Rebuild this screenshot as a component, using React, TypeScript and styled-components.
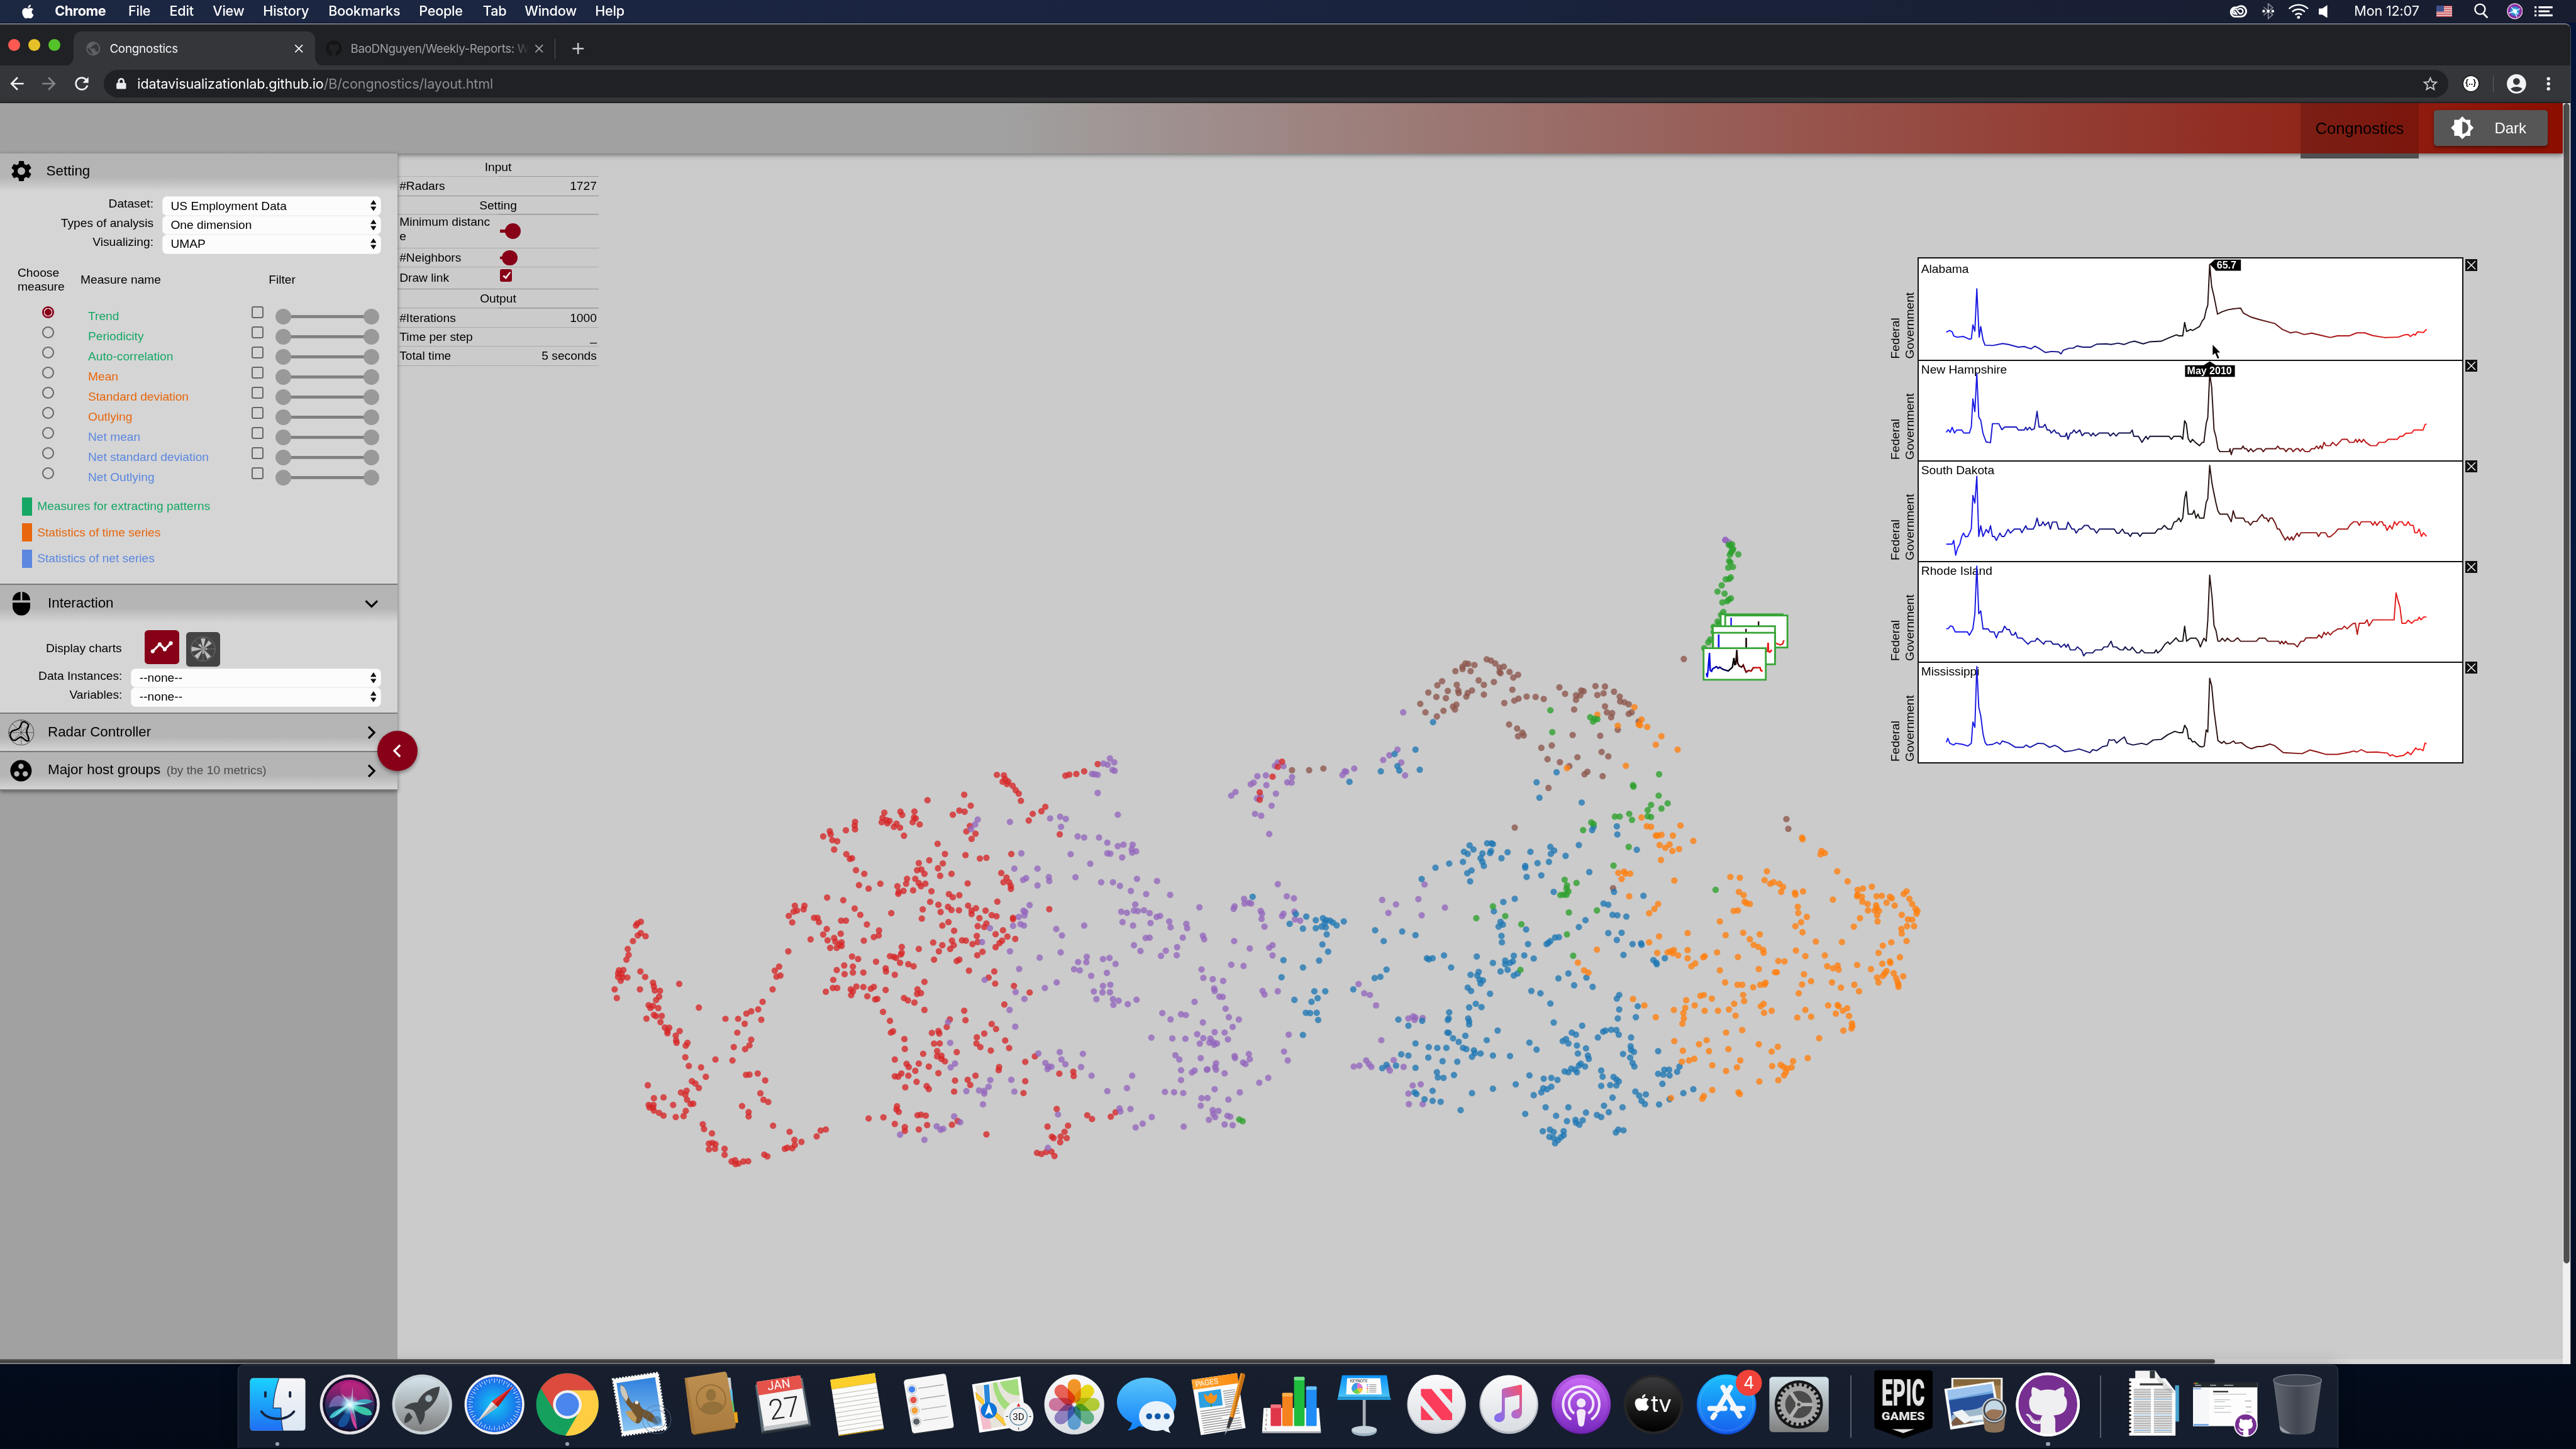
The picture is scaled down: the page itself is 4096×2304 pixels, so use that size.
import React from "react";
import styled, { createGlobalStyle, css } from "styled-components";
import { FaApple, FaGithub, FaLock } from "react-icons/fa";
import {
  MdAccountCircle,
  MdAdd,
  MdArrowBack,
  MdArrowForward,
  MdBrightness6,
  MdClose,
  MdGroupWork,
  MdPublic,
  MdRefresh,
  MdSettings,
  MdStarBorder,
  MdTimeline,
} from "react-icons/md";

/* ------------------------------------------------------------------ */
/* Base                                                                */
/* ------------------------------------------------------------------ */

const GlobalStyle = createGlobalStyle`
  html, body { margin: 0; padding: 0; background: #04102a; overflow: hidden; }
  * { box-sizing: border-box; }
`;

const uiFont = `Inter, Roboto, "Liberation Sans", sans-serif`;
const pageFont = `"Liberation Sans", Arial, Helvetica, sans-serif`;

const Desktop = styled.div`
  zoom: 0.8;
  width: 5120px;
  height: 2880px;
  overflow: hidden;
  display: flex;
  flex-direction: column;
  align-items: flex-start;
  font-family: ${pageFont};
  color: #000;
  background: linear-gradient(180deg, #031238 0%, #04173f 40%, #04102c 80%, #030a16 100%);
`;

/* ------------------------------------------------------------------ */
/* Menu bar                                                            */
/* ------------------------------------------------------------------ */

const MenuBar = styled.div`
  width: 100%;
  height: 45px;
  flex: none;
  display: flex;
  align-items: center;
  justify-content: space-between;
  padding: 0 46px 0 40px;
  background: linear-gradient(90deg, #1c2742 0%, #1a2440 45%, #181d2f 100%);
  color: #fff;
  font-family: ${uiFont};
  font-size: 27px;
  line-height: 44px;
`;

const MenuGroup = styled.div`
  display: flex;
  align-items: center;
  gap: 38px;
  svg { display: block; }
`;

const MenuItem = styled.span<{ $w: number; $bold?: boolean }>`
  width: ${(p) => p.$w}px;
  white-space: nowrap;
  letter-spacing: ${(p) => (p.$bold ? "-0.5px" : "-0.3px")};
  font-weight: ${(p) => (p.$bold ? 700 : 500)};
`;

const StatusGroup = styled.div`
  display: flex;
  align-items: center;
  svg { display: block; flex: none; }
`;

const Clock = styled.span`
  width: 134px;
  margin: 0 29px 0 52px;
  white-space: nowrap;
  letter-spacing: -0.2px;
`;

const Spacer = styled.span<{ $w: number }>`
  width: ${(p) => p.$w}px;
  flex: none;
`;

/* ------------------------------------------------------------------ */
/* Browser chrome                                                      */
/* ------------------------------------------------------------------ */

const BrowserWindow = styled.div`
  width: 5110px;
  height: 2665px;
  flex: none;
  margin-top: 1px;
  display: flex;
  flex-direction: column;
  border-top: 2.5px solid #77787a;
  border-right: 1.25px solid #4a4d55;
  border-radius: 0 12px 0 0;
  overflow: hidden;
  background: #202124;
`;

const TabStrip = styled.div`
  height: 82px;
  flex: none;
  display: flex;
  align-items: flex-end;
  background: #202124;
  font-family: ${uiFont};
  font-size: 23.5px;
`;

const TrafficLights = styled.div`
  width: 146px;
  height: 82px;
  padding: 0 0 1px 16px;
  display: flex;
  align-items: center;
  gap: 16px;
`;

const Light = styled.span<{ $c: string }>`
  width: 24px;
  height: 24px;
  border-radius: 50%;
  background: ${(p) => p.$c};
`;

const Tab = styled.div<{ $active?: boolean }>`
  position: relative;
  height: 68px;
  width: ${(p) => (p.$active ? 480 : 474)}px;
  display: flex;
  align-items: center;
  padding: 0 18px 0 ${(p) => (p.$active ? 23 : 22)}px;
  color: ${(p) => (p.$active ? "#f4f4f5" : "#9fa1a4")};
  background: ${(p) => (p.$active ? "#35363a" : "transparent")};
  border-radius: 16px 16px 0 0;
  svg { flex: none; display: block; }
  ${(p) =>
    p.$active &&
    css`
      &::before, &::after {
        content: "";
        position: absolute;
        bottom: 0;
        width: 16px;
        height: 16px;
      }
      &::before { left: -16px; background: radial-gradient(circle at 0 0, transparent 15.5px, #35363a 16px); }
      &::after { right: -16px; background: radial-gradient(circle at 100% 0, transparent 15.5px, #35363a 16px); }
    `}
`;

const TabTitle = styled.span<{ $fade?: boolean }>`
  flex: 1;
  margin: 0 ${(p) => (p.$fade ? 6 : 14)}px 0 ${(p) => (p.$fade ? 17 : 16)}px;
  white-space: nowrap;
  letter-spacing: ${(p) => (p.$fade ? "-0.5px" : "-0.3px")};
  line-height: 34px;
  ${(p) => p.$fade && css`mask-image: linear-gradient(90deg, #000 90%, transparent 100%);`}
`;

const TabDivider = styled.span`
  width: 2px;
  height: 40px;
  margin: 0 26px 13px 2px;
  background: #55575b;
`;

const NewTab = styled.span`
  height: 68px;
  display: flex;
  align-items: center;
  color: #c6c8ca;
`;

const Toolbar = styled.div`
  height: 74px;
  flex: none;
  display: flex;
  align-items: center;
  padding: 0 26px 0 14px;
  background: #35363a;
  border-bottom: 2.5px solid #27282b;
  color: #f1f3f4;
  font-family: ${uiFont};
  svg { display: block; flex: none; }
`;

const NavButtons = styled.div`
  width: 192px;
  display: flex;
  gap: 24px;
`;

const Omnibox = styled.div`
  flex: 1;
  height: 56px;
  border-radius: 28px;
  background: #202124;
  display: flex;
  align-items: center;
  padding: 0 18px 0 24px;
`;

const Url = styled.span`
  flex: 1;
  margin-left: 21px;
  font-size: 27px;
  line-height: 40px;
  letter-spacing: -0.2px;
  white-space: nowrap;
  color: #fff;
`;

const UrlPath = styled.span`
  color: #8b8d90;
`;

const ExtensionBadge = styled.span`
  width: 30px;
  height: 30px;
  margin: 0 29px;
  border-radius: 50%;
  background: #fff;
  color: #000;
  font: 700 16px/26px ${pageFont};
  text-align: center;
  box-shadow: 0 0 0 2px #1a1b1d;
`;

const ToolDivider = styled.span`
  width: 2px;
  height: 32px;
  margin-right: 22px;
  background: #616266;
`;

/* ------------------------------------------------------------------ */
/* Page frame                                                          */
/* ------------------------------------------------------------------ */

const PageFrame = styled.div`
  flex: 1;
  display: flex;
  min-height: 0;
`;

const PageColumn = styled.div`
  width: 5094px;
  display: flex;
  flex-direction: column;
`;

const VerticalTrack = styled.div`
  flex: 1;
  background: #f0f0f0;
  padding: 1px;
`;

const VerticalThumb = styled.div`
  height: 2306px;
  border-radius: 7px;
  background: #4f4f4f;
  border: 2px solid #6d6d6d;
`;

const HorizontalTrack = styled.div`
  height: 10px;
  flex: none;
  background: #d6d6d6;
`;

const HorizontalThumb = styled.div`
  width: 4402px;
  height: 10px;
  background: #414141;
  border-top: 2.5px solid #5c5c5c;
  border-bottom: 2.5px solid #7e7e7e;
  border-radius: 0 5px 5px 0;
`;

const PageHeader = styled.header`
  position: relative;
  z-index: 1;
  height: 100px;
  flex: none;
  display: flex;
  justify-content: flex-end;
  background: linear-gradient(90deg, #a1a1a1 0%, #a1a1a1 39%, #8d0e00 100%);
  box-shadow: 0 2px 10px rgba(0, 0, 0, 0.5);
  font-size: 32px;
`;

const HeaderTab = styled.div`
  width: 236px;
  height: 110px;
  margin-right: 30px;
  line-height: 102px;
  text-align: center;
  background: linear-gradient(180deg, rgba(70, 8, 4, 0.28) 0, rgba(70, 8, 4, 0.28) 100px, #505050 100px);
`;

const DarkButton = styled.div`
  width: 226px;
  height: 72px;
  margin: 14px 30px 0 0;
  padding-left: 32px;
  display: flex;
  align-items: center;
  gap: 40px;
  border-radius: 6px;
  background: #565656;
  color: #fff;
  font-size: 30px;
  box-shadow: 0 3px 6px rgba(0, 0, 0, 0.4);
`;

const PageBody = styled.div`
  flex: 1;
  display: flex;
  min-height: 0;
`;

/* ------------------------------------------------------------------ */
/* Sidebar                                                             */
/* ------------------------------------------------------------------ */

const Sidebar = styled.aside`
  position: relative;
  z-index: 2;
  width: 790px;
  flex: none;
  background: #a1a1a1;
  font-size: 24px;
`;

const Panel = styled.div`
  background: #d5d5d5;
  border-bottom: 2.5px solid #7d7878;
  box-shadow: 0 2px 8px rgba(0, 0, 0, 0.45);
`;

const SectionHeader = styled.div<{ $first?: boolean }>`
  height: 76px;
  display: flex;
  align-items: center;
  padding: ${(p) => (p.$first ? "0 39px 5px 17px" : "0 38px 0 14px")};
  border-top: ${(p) => (p.$first ? "none" : "2.5px solid #7d7878")};
  background: linear-gradient(180deg, #b4b4b4 0%, #b5b5b5 62%, #d4d4d4 100%);
  svg { display: block; flex: none; }
`;

const SectionIcon = styled.span`
  width: 56px;
  height: 56px;
  display: flex;
  align-items: center;
  justify-content: center;
`;

const SectionTitle = styled.span`
  flex: 1;
  margin-left: 25px;
  font-size: 28px;
  line-height: 36px;
`;

const SectionNote = styled.span`
  margin-left: 12px;
  font-size: 24px;
  color: #4a4a4a;
`;

const SettingBody = styled.div`
  height: 780px;
  padding-top: 10px;
`;

const InteractionBody = styled.div`
  height: 180px;
  padding-top: 16px;
`;

const Field = styled.div`
  height: 38px;
  display: flex;
  padding-right: 32px;
`;

const FieldLabel = styled.span<{ $w: number }>`
  width: ${(p) => p.$w}px;
  margin-right: 17px;
  text-align: right;
  line-height: 29px;
`;

const SelectBox = styled.span`
  flex: 1;
  height: 38px;
  display: flex;
  align-items: center;
  justify-content: space-between;
  padding: 0 9px 1px 16px;
  border: 2px solid #f1f1f1;
  border-radius: 9px;
  background: #fcfcfc;
  line-height: 34px;
`;

const MeasureHead = styled.div`
  display: grid;
  grid-template-columns: 125px 374px 1fr;
  align-items: center;
  margin-top: 24px;
  padding-left: 35px;
  line-height: 28px;
`;

const MeasureList = styled.div`
  margin-top: 24px;
`;

const MeasureRow = styled.div`
  height: 40px;
  display: grid;
  grid-template-columns: 91px 325px 48px 206px;
  padding-left: 84px;
`;

const Radio = styled.span<{ $on?: boolean }>`
  width: 24px;
  height: 24px;
  border-radius: 50%;
  border: 2.5px solid #666;
  ${(p) =>
    p.$on &&
    css`
      border: 2.5px solid #870018;
      background: radial-gradient(circle, #870018 0 6.5px, #f5dfe3 7px 8.3px, #870018 8.8px);
    `}
`;

const Checkbox = styled.span`
  width: 24px;
  height: 24px;
  border: 2.5px solid #666;
  border-radius: 4px;
`;

const MeasureName = styled.span<{ $c: string }>`
  color: ${(p) => p.$c};
  line-height: 41px;
  white-space: nowrap;
`;

const RangeSlider = styled.span`
  height: 41px;
  display: flex;
  align-items: center;
  justify-content: space-between;
  background: linear-gradient(#808080, #808080) center / 180px 6px no-repeat;
  &::before, &::after {
    content: "";
    width: 31px;
    height: 31px;
    border-radius: 50%;
    background: #999;
  }
`;

const Legend = styled.div`
  display: flex;
  flex-direction: column;
  gap: 16px;
  margin-top: 20px;
  padding-left: 44px;
`;

const LegendItem = styled.div<{ $c: string }>`
  height: 36px;
  display: flex;
  align-items: center;
  gap: 10px;
  color: ${(p) => p.$c};
  &::before {
    content: "";
    width: 20px;
    height: 36px;
    background: ${(p) => p.$c};
  }
`;

const ChartPicker = styled.div`
  height: 76px;
  display: flex;
`;

const PickerLabel = styled.span`
  width: 242px;
  margin-right: 46px;
  text-align: right;
  line-height: 72px;
`;

const PickerButton = styled.span<{ $on?: boolean }>`
  width: 68px;
  height: 68px;
  margin: ${(p) => (p.$on ? "0 14px 0 0" : "4px 0 0 0")};
  display: flex;
  align-items: center;
  justify-content: center;
  border-radius: 7px;
  color: #fff;
  background: ${(p) => (p.$on ? "#870018" : "#444")};
`;

const CollapseButton = styled.div`
  position: absolute;
  right: -40px;
  top: 1148px;
  width: 80px;
  height: 80px;
  border-radius: 50%;
  display: flex;
  align-items: center;
  justify-content: center;
  background: #870018;
  box-shadow: 0 4px 8px rgba(0, 0, 0, 0.4);
`;

/* ------------------------------------------------------------------ */
/* Canvas                                                              */
/* ------------------------------------------------------------------ */

const Canvas = styled.main`
  position: relative;
  flex: 1;
  background: #cbcbcb;
  overflow: hidden;
  z-index: 0;
`;

const InfoTable = styled.div`
  width: 400px;
  margin-top: 9px;
  font-size: 24px;
`;

const InfoRow = styled.div<{ $h?: number; $strong?: boolean }>`
  height: ${(p) => p.$h ?? 38}px;
  display: grid;
  grid-template-columns: 200px 200px;
  border-bottom: 2px solid ${(p) => (p.$strong ? "#8f8f8f" : "#aaa")};
`;

const InfoHeading = styled.div`
  height: 38px;
  line-height: 38px;
  text-align: center;
  background: linear-gradient(90deg, #b0b0b0 50%, #999 50%) bottom / 100% 2px no-repeat;
`;

const InfoName = styled.span<{ $lh?: number }>`
  padding-left: 4px;
  line-height: ${(p) => p.$lh ?? 38}px;
  white-space: pre-line;
`;

const InfoValue = styled.span`
  padding-right: 4px;
  line-height: 38px;
  text-align: right;
`;

const InfoSlider = styled.span<{ $stub: number }>`
  display: flex;
  align-items: center;
  padding-left: 4px;
  &::before {
    content: "";
    width: ${(p) => p.$stub}px;
    height: 6px;
    background: #870018;
  }
  &::after {
    content: "";
    width: 31px;
    height: 31px;
    margin-left: -1px;
    border-radius: 50%;
    background: #870018;
  }
`;

const InfoCheck = styled.span`
  width: 24px;
  height: 24px;
  margin: 4px 0 0 4px;
  border-radius: 4px;
  background: #870018;
  svg { display: block; }
`;

const Plot = styled.svg`
  position: absolute;
  left: 0;
  top: 0;
`;

const SeriesPanel = styled.div`
  position: absolute;
  left: 2962px;
  top: 207px;
  width: 1172px;
  font-size: 24px;
`;

const SeriesRow = styled.div<{ $h: number }>`
  height: ${(p) => p.$h}px;
  display: flex;
`;

const AxisLabel = styled.span`
  width: 58px;
  height: 100%;
  padding-top: 1px;
  writing-mode: vertical-rl;
  transform: rotate(180deg);
  line-height: 29px;
  white-space: pre-line;
`;

const SeriesBox = styled.div<{ $first?: boolean; $last?: boolean }>`
  position: relative;
  width: 1086px;
  height: ${(p) => (p.$last ? "calc(100% + 3px)" : "100%")};
  margin-left: 1px;
  padding: ${(p) => (p.$first ? 4 : 0)}px 0 0 5px;
  border: 3px solid #111;
  border-bottom-width: ${(p) => (p.$last ? 3 : 0)}px;
  background: #fff;
  line-height: 36px;
`;

const SeriesSvg = styled.svg`
  position: absolute;
  left: 0;
  top: 0;
  overflow: visible;
`;

const RemoveButton = styled.span<{ $first?: boolean }>`
  width: 24px;
  height: 24px;
  margin: ${(p) => (p.$first ? 3 : 0)}px 0 0 4px;
  background: #111;
  svg { display: block; }
`;

/* ------------------------------------------------------------------ */
/* Dock                                                                */
/* ------------------------------------------------------------------ */

const Dock = styled.div`
  position: relative;
  width: 4174px;
  height: 166px;
  flex: none;
  margin: 1px 0 0 473px;
  padding: 0 5px;
  display: flex;
  border: 2px solid #343e4d;
  border-bottom: none;
  border-radius: 12px 12px 0 0;
  background: linear-gradient(180deg, #171e2d, #151e2f);
  box-shadow: 0 0 34px rgba(0, 0, 0, 0.2);
`;

const DockItem = styled.div<{ $running?: boolean }>`
  position: relative;
  width: 144px;
  padding: 14px 8px 0;
  svg { display: block; overflow: visible; }
  ${(p) =>
    p.$running &&
    css`
      &::after {
        content: "";
        display: block;
        width: 8px;
        height: 8px;
        margin: 11px auto 0;
        border-radius: 50%;
        background: #9aa3b5;
      }
    `}
`;

const DockDivider = styled.div`
  width: 64px;
  padding: 20px 0 0 31px;
  &::before {
    content: "";
    display: block;
    width: 2px;
    height: 124px;
    background: #565e6c;
  }
`;

/* ------------------------------------------------------------------ */
/* Data                                                                */
/* ------------------------------------------------------------------ */

const GREEN = "#16a765";
const ORANGE = "#e8660c";
const BLUE = "#5b87df";

const measures: [string, string][] = [
  ["Trend", GREEN],
  ["Periodicity", GREEN],
  ["Auto-correlation", GREEN],
  ["Mean", ORANGE],
  ["Standard deviation", ORANGE],
  ["Outlying", ORANGE],
  ["Net mean", BLUE],
  ["Net standard deviation", BLUE],
  ["Net Outlying", BLUE],
];

type Grid = { x: number; y: number; sx: number; sy: number };
const westGrid: Grid = { x: 1180, y: 1450, sx: 1360 / 1568, sy: 900 / 1568 };
const eastGrid: Grid = { x: 2400, y: 1050, sx: 1480 / 1568, sy: 1260 / 1568 };
const peakGrid: Grid = { x: 3300, y: 1040, sx: 1 / 3, sy: 1 / 3 };
const seriesGrid: Grid = { x: 3720, y: 490, sx: 1220 / 1568, sy: 1040 / 1568 };

const toPoints = (raw: string, g: Grid, ox: number, oy: number): [number, number][] => {
  const n = raw.trim().split(/[\s,]+/).map(Number);
  const out: [number, number][] = [];
  for (let i = 0; i + 1 < n.length; i += 2) {
    out.push([+(g.x + n[i] * g.sx - ox).toFixed(1), +(g.y + n[i + 1] * g.sy - oy).toFixed(1)]);
  }
  return out;
};

const westRed = `108 664 97 677 100 670 108 703 101 711 119 714 90 731 78 758 80 779 75 795 58 832 68 831 56 843 64 845 56 855 66 856 77 857 62 868 107 836 118 855 48 898 53 928 106 898 136 875 138 888 140 902 152 903 150 923 143 935 126 953 136 955 130 962 148 963 138 986 143 991 156 990 121 999 153 1011 163 1030 173 1031 169 1042 169 1050 197 1042 188 1058 189 1075 190 1083 215 1083 211 1093 196 879 241 961 210 1133 218 1163 246 1168 257 1201 225 1216 233 1224 241 1239 124 1230 138 1275 160 1272 200 1255 213 1249 210 1263 214 1280 182 1298 222 1295 228 1294 126 1298 137 1298 128 1307 136 1308 138 1318 150 1326 160 1335 188 1340 206 1337 211 1319 250 1365 253 1382 271 1397 264 1432 272 1430 279 1434 264 1452 278 1450 300 1450 300 1471 316 1494 324 1490 325 1503 332 1501 343 1494 354 1493 391 1470 398 1476 411 1370 449 1391 460 1419 476 1426 438 1450 444 1446 455 1448 461 1437 511 1407 520 1387 532 1383 302 1000 331 1000 350 982 361 974 377 967 387 941 384 1003 346 1017 329 1048 361 1072 357 1092 347 1105 321 1098 318 1144 279 1141 349 1194 357 1193 376 1189 393 1213 382 1258 389 1280 400 1288 340 1302 355 1323 355 1338 410 898 419 854 428 850 415 833 425 819 446 766 447 644 455 666 461 608 483 608 458 629 466 625 481 621 505 650 513 650 516 665 535 580 572 589 526 368 541 350 543 361 547 381 558 385 551 414 578 347 599 318 598 331 599 344 579 430 587 446 592 444 601 485 620 498 608 537 630 549 657 532 666 286 662 304 660 319 671 312 678 315 673 323 688 335 694 324 702 338 703 283 707 294 711 366 735 282 734 303 731 319 738 306 747 327 765 243 849 224 864 262 838 279 850 283 823 293 862 332 854 351 875 359 866 377 924 155 940 157 937 179 943 170 947 187 950 178 960 193 967 208 974 220 979 245 1035 266 1026 281 1006 290 997 313 1068 361 1081 158 1090 154 1106 152 1124 143 1155 118 788 394 805 429 769 451 745 461 800 462 789 479 741 485 751 483 758 498 794 505 820 498 852 433 885 445 900 442 857 531 718 515 737 515 745 530 716 532 696 541 699 560 710 557 698 567 732 555 750 541 760 532 774 558 771 595 790 605 754 621 795 630 752 653 814 568 823 579 838 572 812 612 820 623 837 624 858 608 866 625 876 617 866 637 898 625 925 594 912 641 923 645 884 651 900 670 813 665 799 677 826 695 880 679 895 682 878 713 921 707 938 693 948 715 966 723 936 729 930 738 921 752 891 768 868 741 880 734 853 729 844 728 821 729 825 745 817 758 799 745 791 766 778 736 780 795 745 758 706 751 879 780 838 795 832 800 961 650 961 655 957 429 934 495 946 511 939 527 952 527 956 540 956 550 1044 620 860 833 918 836 905 857 920 878 963 886 999 909 941 950 598 618 611 640 567 660 578 660 626 673 682 634 654 694 653 711 642 717 619 729 534 689 526 708 497 725 566 705 536 728 551 720 554 733 568 735 563 743 542 754 557 754 568 748 592 784 606 793 647 802 679 783 688 785 693 789 704 777 706 771 702 806 721 811 733 818 690 847 669 825 670 836 618 840 594 819 594 840 574 815 575 845 557 831 549 865 548 893 558 893 532 906 589 898 602 888 618 890 635 896 642 889 594 905 590 918 627 922 645 933 650 931 669 900 758 872 742 898 750 911 741 914 711 928 720 936 735 944 758 969 663 976 679 1007 686 1043 681 1048 712 1070 713 1104 849 972 852 1005 816 1002 809 1028 775 1049 790 1042 792 1051 780 1086 793 1085 787 1112 832 1115 755 1121 787 1130 797 1128 797 1139 805 1147 745 1155 768 1165 690 1141 717 1156 722 1167 737 1180 705 1189 690 1199 698 1200 721 1197 790 1188 740 1218 714 1237 763 1233 768 1243 828 1214 826 1252 857 1211 863 1229 875 1197 912 1018 922 1035 895 1051 878 1064 877 1085 886 1098 910 1110 943 1075 952 1101 929 1167 928 1178 989 1149 1011 1130 989 1216 985 1257 695 1303 694 1314 699 1322 630 1345 664 1341 690 1364 742 1334 750 1332 761 1335 764 1368 713 1375 713 1388 745 1383 834 1354 821 1367 900 1400 1067 1190 1099 1183 1100 1198 1061 1312 1040 1373 1087 1370 1079 1391 1050 1408 1054 1413 1070 1408 1084 1413 1069 1427 1016 1464 1026 1468 1037 1461 1049 1460 1056 1475 1131 1334 1142 1347 1185 1339 1196 1324`;

const westPurple = `1183 98 1193 112 1168 116 1178 120 1189 138 1194 141 1142 152 1148 153 1155 155 1155 218 1201 293 880 310 874 327 865 343 954 318 1046 306 1069 300 1082 308 1071 335 1109 368 1124 372 1158 372 1177 390 1201 402 1214 397 1235 397 1233 413 1243 420 1234 424 1177 427 1184 428 1211 441 1093 430 1138 463 980 427 964 480 1017 480 991 513 984 519 1043 509 1044 523 1017 538 1104 510 1163 527 1190 527 1206 540 1245 515 1291 523 1231 557 1266 568 1321 571 1241 604 999 606 985 626 989 630 974 647 987 642 978 672 961 678 986 677 908 686 890 734 954 766 1060 689 1073 711 1124 677 1209 629 1222 633 1238 625 1247 627 1261 624 1274 634 1290 647 1298 644 1212 665 1236 677 1276 668 1319 663 1322 683 1358 671 1360 686 1388 614 1396 712 1399 724 1350 719 1265 720 1274 719 1238 745 1253 765 1337 752 1336 780 1311 764 1300 782 1070 770 1022 788 975 827 1110 803 1130 785 1129 804 1101 828 1114 832 1167 793 1182 789 1196 810 1140 851 1176 841 1167 886 1184 882 1146 905 1166 908 1183 908 1152 932 1190 932 1203 937 1191 951 1224 949 1244 934 1061 874 1034 893 896 865 967 907 987 931 953 969 966 1027 812 1011 817 1083 828 1155 818 1168 909 1212 905 1235 883 1248 895 1249 895 1259 854 1250 957 1211 964 1252 892 1296 1019 1120 1068 1115 1072 1141 1081 1157 1035 1153 1042 1165 1049 1166 1040 1174 1121 1121 1117 1167 1141 1197 1177 1250 1222 1240 1234 1197 1278 1065 1303 980 1322 1002 1346 984 1357 987 1377 941 1326 1068 1356 1069 1383 1053 1396 1012 1397 1067 1389 1086 1333 1126 1342 1141 1391 1136 1346 1178 1371 1186 1377 1179 1346 1212 1309 1253 1330 1254 1351 1257 1393 1275 1391 1301 1352 1373 1279 1340 1258 1363 1242 1376 1205 1310 1207 1321 1230 1312 1064 1331 1041 1447 826 1338 840 1358 786 1372 795 1384 801 1381 702 1401 758 1419 1393 829 1397 858 1405 1176`;

const eastPurple = `412 454 400 546 383 560 370 572 408 578 416 610 309 593 289 600 284 609 292 601 148 578 142 586 160 587 123 610 105 612 91 632 97 628 124 634 168 627 177 628 178 614 144 655 104 667 112 662 135 685 100 705 113 710 59 651 50 660 130 755 148 879 167 909 182 914 77 915 78 927 87 925 92 927 57 934 55 940 112 945 115 952 114 965 120 984 157 958 160 952 183 947 184 966 195 969 56 1020 89 1038 137 1030 130 1036 137 1055 50 1078 76 1081 11 1114 33 1118 14 1137 15 1143 25 1157 32 1158 38 1187 45 1208 66 1214 53 1232 15 1245 36 1246 43 1263 6 1261 12 1270 14 1276 20 1273 4 1271 57 1304 58 1309 87 1299 89 1312 75 1320 80 1324 18 1322 16 1331 18 1338 0 1337 36 1347 109 1370 128 1358 15 1386 68 1394 44 1412 0 1408 11 1438 23 1440 12 1447 16 1455 3 1462 42 1452 48 1454 36 1473 53 1475 161 1293 169 1315 171 1251 116 1143 120 1152 148 1144 318 1126 330 1149 342 1153 355 1179 366 1265 308 1330 320 1328 334 1315 340 1324 345 1331 392 1314 380 1332 384 1340 413 1331 423 1211 433 1206 438 1209 436 1215 453 1210 432 1377 449 1374 423 1397 424 1423 453 1423 368 918 397 929 381 950 444 916 457 880 451 956 500 937`;

const eastRed = `157 576 148 589 137 613 110 652 110 670`;

const eastBrown = `178 597 214 597 244 593 588 323 597 326 606 333 543 333 549 334 562 337 537 341 537 347 554 352 522 352 615 343 624 341 615 354 617 357 636 354 654 361 644 368 603 379 571 375 582 386 582 410 494 377 484 387 525 386 465 405 482 416 506 401 502 419 528 400 529 406 548 406 557 400 545 415 448 433 459 454 497 450 483 464 524 435 517 440 521 447 642 398 625 431 646 425 655 420 672 415 691 416 708 421 741 392 753 408 787 400 792 402 776 412 785 412 776 423 817 389 837 390 821 411 834 407 856 403 868 415 869 427 878 429 887 434 837 439 772 447 841 454 852 456 850 466 893 454 887 458 908 477 864 497 635 484 652 494 663 504 654 513 666 511 769 510 827 512 703 542 725 536 716 570 742 577 762 587 779 565 830 552 844 563 794 607 800 601 832 612 718 641 647 739 1003 322 854 889 1219 718 1223 742`;

const eastGreen = `722 449 806 466 815 470 821 471 812 477 726 503 951 607 896 634 897 638 950 660 969 679 934 683 956 692 927 696 927 711 934 713 888 705 894 720 858 712 868 712 808 726 813 730 791 745 887 787 855 833 752 868 757 882 777 876 756 890 760 897 743 906 750 905 756 905 1070 893 601 934 566 963 627 958 661 978 761 949 820 944 757 1003 770 1056 659 1091 67 1461 74 1465`;

const peakGreen = `408 125 428 122 418 132 434 150 430 158 422 170 415 185 465 182 410 222 418 230 405 262 433 257 390 331 410 329 420 320 366 367 341 404 383 416 370 469 398 462 408 452 421 445 376 526 362 543 342 583 350 598 318 614 318 645 298 690 286 707 262 742`;
const peakPurple = `388 97 388 97 408 110`;

const eastBlue = `475 478 438 546 394 557 400 587 404 598 365 600 447 596 299 626 735 602 693 627 699 665 788 677 862 736 863 756 813 737 810 745 904 794 782 782 804 849 754 809 722 787 730 796 723 804 719 824 695 827 680 799 669 834 669 838 672 861 703 857 589 778 598 778 601 780 597 797 595 802 632 800 619 815 552 783 560 793 540 799 548 804 579 803 575 815 579 824 582 834 538 824 509 828 480 838 451 866 556 845 547 852 553 872 729 898 647 915 623 923 603 946 617 972 622 979 613 984 619 1007 620 1023 671 991 675 1027 714 1027 718 1024 722 1020 732 1011 740 1010 782 985 796 968 834 927 844 930 856 898 853 955 863 956 882 959 918 908 844 1000 872 999 862 1017 895 1027 913 1025 914 1029 876 1054 939 1067 945 1073 946 1077 963 1062 95 910 186 953 208 959 173 977 201 989 228 968 243 963 250 968 258 969 228 988 247 975 240 984 249 986 264 974 272 981 287 971 251 1003 242 1028 254 1046 235 1068 160 1067 201 1085 156 1109 183 1165 225 1144 248 1144 232 1161 219 1170 207 1197 216 1198 230 1197 233 1215 201 1252 307 1139 353 993 371 1020 410 996 438 1005 377 1090 364 1108 352 1111 402 1214 423 1229 452 1217 438 1273 408 1300 423 1303 377 1326 368 1334 397 1328 438 1333 462 1062 474 1062 466 1065 498 1055 513 1085 567 1058 601 1074 571 1096 554 1103 568 1105 573 1115 580 1117 575 1125 548 1135 555 1143 595 1150 565 1175 577 1183 551 1184 509 1196 508 1211 506 1215 549 1211 551 1218 551 1226 505 1246 508 1247 517 1260 543 1254 529 1269 466 1282 484 1284 503 1284 538 1284 545 1287 561 1290 563 1297 557 1306 575 1298 588 1265 611 1241 601 1303 637 1304 465 1308 495 1317 526 1318 483 1344 485 1357 497 1358 519 1351 474 1390 436 1394 440 1398 457 1411 474 1415 491 1417 557 1396 601 1385 649 1374 533 1438 669 1447 627 1068 627 1077 645 1056 643 1070 637 1074 617 1095 632 1091 645 1105 653 1100 667 1055 687 1063 739 1112 760 1100 772 1129 798 1110 811 1133 682 1143 701 1149 722 1174 729 1221 789 1229 867 1153 862 1162 867 1189 864 1211 906 1181 902 1208 838 1241 850 1239 861 1240 866 1251 822 1258 833 1244 892 1258 767 1246 776 1251 755 1262 748 1267 760 1273 778 1278 797 1285 780 1298 801 1303 803 1311 678 1271 693 1288 875 1299 891 1280 892 1289 898 1294 890 1308 895 1321 899 1330 949 1292 786 1323 795 1330 782 1328 766 1335 774 1338 752 1342 760 1344 778 1344 829 1340 832 1355 855 1356 861 1362 866 1367 848 1376 861 1377 829 1378 678 1352 708 1360 724 1358 737 1363 707 1384 715 1386 724 1380 703 1394 687 1401 853 1407 835 1427 874 1431 845 1443 820 1450 829 1455 797 1444 760 1431 712 1431 734 1452 757 1465 775 1462 790 1463 783 1474 776 1469 706 1490 721 1486 729 1492 720 1504 729 1507 750 1490 750 1500 744 1505 738 1512 732 1520 860 1493 865 1486 876 1488 901 1392 909 1402 923 1399 914 1415 921 1423 951 1424 973 1411 1002 1396 1023 1386 958 1373 949 1348 962 1338 972 1338 973 1352 960 1350 989 1343 994 1330`;

const eastOrange = `899 441 821 460 914 472 864 487 908 484 911 486 926 490 956 513 944 534 990 546 881 586 757 592 914 714 925 736 934 737 996 734 944 759 948 759 956 757 980 759 1023 772 952 782 973 781 964 789 979 797 993 792 955 819 865 851 877 848 880 853 890 853 872 866 983 870 888 909 949 928 941 940 930 951 951 1008 930 1023 1011 1000 820 1041 780 1073 793 1092 802 1098 947 1049 969 1048 975 1045 982 1042 980 1050 991 1055 1011 1042 1011 1062 1027 1075 1019 1082 1044 1060 1047 1057 1073 1048 1079 1092 1090 1122 1101 861 1121 863 1119 898 1129 906 1131 922 1135 926 1142 928 1108 945 1117 944 1079 971 1091 1005 1128 999 1142 1015 1150 1029 1160 1034 1163 1003 1170 1041 1171 1049 1117 1059 1161 1089 1178 847 1173 869 1185 878 1192 874 1204 878 1212 886 1208 898 1237 900 1238 905 1254 897 1243 935 1244 950 1262 960 1250 973 1238 983 1253 998 1281 1021 1239 1043 1259 1057 1202 1069 1215 1070 1195 1097 1199 1097 1300 1055 1252 764 1253 768 1293 797 1300 802 1291 805 1326 847 1348 872 1317 917 1369 893 1380 890 1399 885 1369 905 1368 909 1378 910 1379 922 1390 928 1391 944 1409 909 1420 908 1437 910 1441 914 1408 931 1409 938 1414 945 1405 944 1430 925 1447 932 1410 956 1411 971 1374 963 1361 984 1336 1022 1472 897 1466 903 1478 915 1484 928 1462 955 1475 966 1484 967 1491 940 1495 945 1493 952 1488 983 1473 983 1461 990 1462 1001 1472 1020 1440 1023 1422 1031 1413 1049 1458 1060 1437 1070 1438 1074 1421 1076 1368 1079 1397 1089 1430 1094 1426 1100 1422 1106 1410 1110 1445 1099 1450 1111 1465 1107 1413 1122 1453 1121 1455 1127 1455 1133 1305 1082 1317 1087 1327 1080 1329 1090 1256 1102 1271 1119 1252 1127 1245 1149 1315 1122 1334 1135 1362 1128 1372 1144 1116 1128 1126 1128 1149 1134 1164 1128 1173 1127 1175 1123 1128 1153 1130 1168 1109 1175 1098 1189 1112 1204 1075 1192 1062 1162 1038 1155 1045 1153 1047 1192 1008 1166 1026 1179 1006 1185 982 1190 1002 1198 1003 1211 1000 1224 944 1208 920 1179 896 1163 1171 1175 1165 1181 1172 1197 1188 1192 1259 1190 1271 1207 1242 1209 1307 1179 1327 1178 1329 1181 1323 1199 1338 1192 1347 1186 1351 1205 1357 1223 1358 1230 1356 1236 1339 1241 1288 1260 1092 1246 1126 1240 1051 1265 1035 1275 983 1267 1001 1291 1056 1292 1097 1287 1161 1275 1201 1281 1188 1293 1264 1309 999 1318 1014 1315 1025 1311 1063 1327 1092 1341 1115 1332 1122 1315 1189 1329 1207 1326 1213 1331 1221 1335 1233 1317 1230 1332 1218 1344 1214 1352 1202 1364 1162 1367 1063 1388 1045 1403 1042 1410 1118 1394 1121 1398 976 1408`;

const clusters: { color: string; grid: Grid; raw: string }[] = [
  { color: "#d62728", grid: westGrid, raw: westRed },
  { color: "#9467bd", grid: westGrid, raw: westPurple },
  { color: "#9467bd", grid: eastGrid, raw: eastPurple },
  { color: "#d62728", grid: eastGrid, raw: eastRed },
  { color: "#8c564b", grid: eastGrid, raw: eastBrown },
  { color: "#1f77b4", grid: eastGrid, raw: eastBlue },
  { color: "#ff7f0e", grid: eastGrid, raw: eastOrange },
  { color: "#2ca02c", grid: eastGrid, raw: eastGreen },
  { color: "#9467bd", grid: peakGrid, raw: peakPurple },
  { color: "#2ca02c", grid: peakGrid, raw: peakGreen },
];

const series: { name: string; height: number; top: number; raw: string }[] = [
  {
    name: "Alabama",
    height: 203,
    top: 511,
    raw: `191 257,200 252,206 256,210 268,218 272,235 270,250 278,255 277,259 235,264 254,269 127,275 272,279 240,285 280,290 296,310 297,335 291,350 294,375 302,390 300,407 307,417 299,430 307,444 318,460 315,478 316,484 322,490 311,505 305,515 305,525 298,540 302,560 302,575 293,600 292,612 294,630 290,645 294,660 287,672 284,694 292,710 286,740 284,760 274,779 265,785 268,795 268,800 228,805 255,815 249,820 252,838 240,845 223,850 216,855 190,859 176,864 54,869 120,875 150,884 203,895 196,910 190,925 187,943 185,950 200,970 212,990 219,1030 231,1050 249,1070 259,1085 256,1105 264,1125 260,1150 267,1172 273,1190 268,1220 268,1240 259,1260 259,1280 267,1310 273,1345 272,1362 265,1370 264,1377 270,1385 263,1389 266,1395 256,1410 258,1418 248`,
  },
  {
    name: "New Hampshire",
    height: 200,
    top: 714,
    raw: `191 556,196 548,201 556,206 541,212 558,218 549,230 549,236 558,250 558,255 540,259 456,264 494,269 380,274 510,279 520,285 560,293 585,304 587,309 530,325 530,333 548,340 540,370 540,375 549,390 549,394 541,398 549,404 541,409 549,416 545,423 493,428 540,438 540,443 532,449 549,455 549,459 558,467 549,472 558,478 558,483 568,495 568,498 558,502 577,508 558,512 558,517 549,523 558,532 549,538 566,545 558,555 558,561 567,566 558,572 567,582 558,605 558,610 567,618 558,625 567,632 558,661 558,666 549,670 568,682 568,691 586,701 568,706 577,711 568,760 568,766 577,772 568,790 568,795 577,800 521,804 530,809 575,815 586,820 577,828 587,838 596,845 586,849 586,855 530,859 512,864 380,869 420,875 548,880 570,885 605,890 614,914 614,916 605,919 623,924 605,945 605,949 597,953 605,958 605,963 614,969 605,975 614,985 605,995 605,1001 614,1007 605,1033 605,1038 597,1043 605,1053 605,1059 614,1065 605,1072 605,1077 614,1085 605,1090 605,1095 613,1101 605,1108 614,1118 614,1124 605,1132 605,1137 597,1142 605,1147 596,1151 605,1156 586,1161 596,1172 596,1178 586,1187 596,1202 577,1215 577,1221 586,1232 586,1237 577,1241 586,1246 577,1252 586,1257 577,1263 586,1275 596,1290 596,1296 586,1312 586,1320 577,1343 577,1350 568,1357 568,1365 559,1380 558,1386 549,1409 549,1414 533,1418 531`,
  },
  {
    name: "South Dakota",
    height: 200,
    top: 914,
    raw: `191 891,206 891,210 880,215 924,220 903,226 890,230 870,235 858,240 869,246 868,251 856,255 845,259 745,264 768,269 688,274 868,279 836,285 868,293 847,299 857,304 836,309 868,314 868,319 880,328 858,333 868,339 868,349 847,355 858,365 846,380 846,384 857,394 836,398 846,413 846,418 835,423 813,428 836,434 834,438 824,443 835,452 825,457 846,462 825,473 825,478 846,497 846,502 825,512 846,518 846,523 858,530 846,536 846,544 835,553 835,560 846,568 846,575 858,582 846,620 846,627 858,633 858,641 846,647 858,655 858,661 868,666 858,680 858,686 868,692 858,724 858,732 846,740 846,748 835,757 846,766 846,773 825,780 822,785 813,790 824,795 813,800 755,804 733,809 801,820 801,824 790,829 813,834 801,838 813,849 813,855 766,859 755,864 655,870 710,875 740,880 768,885 792,890 801,909 801,914 812,919 824,924 791,930 813,950 813,955 824,962 824,968 834,975 823,984 823,990 813,998 802,1003 813,1009 813,1014 824,1018 813,1024 813,1032 830,1037 846,1042 846,1048 860,1057 879,1063 869,1068 879,1073 869,1077 879,1087 858,1092 868,1097 857,1137 857,1142 868,1148 857,1160 857,1166 869,1172 869,1184 857,1192 846,1216 846,1222 834,1232 824,1241 824,1246 835,1251 824,1275 824,1281 834,1286 824,1291 835,1298 824,1305 824,1308 834,1312 834,1317 850,1324 835,1330 846,1336 824,1342 834,1348 824,1355 824,1361 834,1366 834,1371 824,1376 834,1384 835,1388 857,1394 857,1399 846,1405 868,1410 857,1418 868`,
  },
  {
    name: "Rhode Island",
    height: 200,
    top: 1114,
    raw: `191 1145,196 1144,202 1136,207 1138,214 1154,245 1154,250 1164,259 1145,264 1100,269 957,274 1100,279 1091,285 1145,298 1145,303 1154,313 1154,319 1172,325 1154,334 1154,340 1137,346 1147,352 1147,358 1163,364 1163,368 1155,373 1172,385 1173,392 1182,400 1191,408 1182,418 1182,423 1173,432 1182,440 1191,444 1182,458 1182,464 1191,478 1191,484 1200,493 1191,497 1200,502 1191,508 1208,520 1208,526 1199,537 1210,542 1226,548 1217,565 1217,572 1208,588 1208,594 1199,603 1199,612 1182,617 1199,625 1199,635 1208,643 1208,648 1199,655 1208,661 1208,666 1200,672 1209,678 1217,684 1217,690 1208,698 1217,722 1217,727 1208,731 1217,740 1208,750 1191,757 1184,762 1191,770 1182,778 1172,785 1182,795 1182,800 1137,805 1182,815 1173,829 1173,835 1182,840 1199,849 1173,855 1182,859 1120,864 984,870 1050,875 1135,880 1150,885 1182,890 1182,896 1173,903 1182,909 1173,918 1182,925 1182,935 1172,943 1182,983 1182,990 1173,1006 1173,1012 1182,1040 1182,1044 1190,1048 1182,1053 1190,1058 1182,1063 1190,1080 1190,1088 1199,1097 1182,1104 1182,1110 1172,1138 1172,1143 1163,1150 1172,1156 1155,1161 1163,1166 1155,1172 1163,1178 1155,1192 1145,1202 1145,1208 1137,1215 1145,1222 1137,1230 1129,1236 1128,1241 1162,1246 1128,1260 1128,1266 1118,1271 1136,1281 1118,1335 1118,1340 1037,1345 1060,1350 1080,1355 1128,1365 1128,1371 1119,1380 1128,1388 1119,1395 1119,1399 1110,1404 1118,1411 1109,1418 1110`,
  },
  {
    name: "Mississippi",
    height: 200,
    top: 1314,
    raw: `191 1485,195 1473,200 1488,210 1493,215 1488,232 1491,246 1496,255 1488,259 1424,264 1440,269 1258,274 1380,279 1405,285 1460,290 1485,295 1493,310 1491,320 1485,328 1491,334 1481,350 1487,368 1500,388 1500,395 1493,405 1500,425 1488,440 1489,455 1500,468 1494,477 1499,493 1513,513 1510,530 1505,548 1512,558 1516,565 1507,575 1510,590 1498,602 1495,607 1477,613 1479,620 1477,626 1487,634 1479,646 1469,653 1488,668 1493,690 1488,703 1492,720 1478,740 1476,757 1462,775 1452,785 1456,795 1456,800 1434,806 1445,810 1474,815 1474,820 1484,825 1482,838 1497,845 1499,850 1496,855 1448,859 1454,864 1293,869 1315,875 1390,880 1435,885 1480,895 1488,900 1482,906 1489,915 1488,925 1481,930 1488,945 1486,958 1498,970 1504,985 1498,1000 1497,1018 1490,1030 1495,1052 1516,1100 1519,1120 1508,1140 1514,1160 1521,1190 1521,1220 1515,1232 1511,1240 1514,1251 1507,1265 1515,1290 1514,1305 1516,1318 1517,1325 1526,1330 1522,1340 1528,1360 1524,1370 1514,1378 1522,1390 1502,1396 1507,1402 1505,1409 1510,1414 1487,1418 1490`,
  },
];

/* ------------------------------------------------------------------ */
/* Small drawings                                                      */
/* ------------------------------------------------------------------ */

const SelectArrows = () => (
  <svg width="12" height="22" viewBox="0 0 12 22">
    <path d="M6 0l6 9H0zM6 22l6-9H0z" fill="#111" />
  </svg>
);

const Chevron = ({ dir, color = "#000" }: { dir: "down" | "right" | "left"; color?: string }) => (
  <svg width="27" height="27" viewBox="0 0 27 27" fill="none" stroke={color} strokeWidth="4">
    {dir === "down" && <path d="M2 8l11.5 11.5L25 8" />}
    {dir === "right" && <path d="M7.5 2L19 13.5L7.5 25" />}
    {dir === "left" && <path d="M19 2L7.5 13.5L19 25" />}
  </svg>
);

const MouseIcon = () => (
  <svg width="35" height="47" viewBox="0 0 35 47">
    <path d="M15.8 0v17H0C0 8 6 1 15.8 0zM19.2 0v17H35C35 8 29 1 19.2 0zM0 21.500h35V29a17.500 18 0 0 1-35 0z" />
  </svg>
);

const RadarIcon = () => (
  <svg width="52" height="52" viewBox="0 0 52 52" fill="none" stroke="#000">
    <circle cx="26" cy="26" r="25" strokeWidth=".8" />
    <path d="M26 1v50M1 26h50M8 8l36 36M44 8L8 44" strokeWidth=".9" strokeDasharray="3 1.500" />
    <path
      d="M26 9c1-5 6-5 9-3 4 2 6 5 5 8-3 5-4 8-3 13 1 6 5 9 4 14-1 3-4 2-7 0-4-3-6-6-9-6-4 0-6 4-10 6-4 2-8-1-10-6-2-6 0-11 5-13 6-2 11-2 13-6 1-2 2-5 3-7z"
      strokeWidth="3"
    />
  </svg>
);

const PetalIcon = () => (
  <svg width="50" height="50" viewBox="-25 -25 50 50">
    <circle r="24" fill="none" stroke="#999" strokeWidth=".7" />
    <path d="M0-24V24M-24 0H24M-17-17L0 0" stroke="#aaa" strokeWidth=".9" strokeDasharray="2.500 1.500" />
    {[
      [0, 21],
      [45, 20],
      [-90, 23],
      [145, 21],
      [-140, 22],
      [-40, 12],
      [90, 8],
      [180, 9],
    ].map(([a, l]) => (
      <path key={a} transform={`rotate(${a})`} d={`M0 0L${-l * 0.22} ${-l}H${l * 0.22}z`} fill="#bdbdbd" />
    ))}
  </svg>
);

/* Status icons on the right of the menu bar */
const StatusIcons = () => (
  <StatusGroup>
    <svg width="40" height="30" viewBox="0 0 40 30" fill="none" stroke="#fff" strokeWidth="3.600">
      <path d="M13 25.500h14a10.500 10.500 0 1 0-8-18 9.200 9.200 0 1 0-6 18z" />
      <path d="M27 20c-5 0-6-4-9-8-2-2.500-8-2-8 3.500 0 5 5 5 7 4M19 22l-6-8M21 12c3-4 10-2 9.500 3.500C30 20 26 21 23 19" strokeWidth="3" />
    </svg>
    <Spacer $w={29} />
    <svg width="24" height="32" viewBox="0 0 24 32" fill="none" stroke="#8b8f9b" strokeWidth="2">
      <path d="M3 8l18 15-9 8V1l9 8L3 24" />
      <g fill="#fff" stroke="none">
        <circle cx="3" cy="16" r="2.800" />
        <circle cx="12" cy="16" r="2.800" />
        <circle cx="21" cy="16" r="2.800" />
      </g>
    </svg>
    <Spacer $w={27} />
    <svg width="42" height="30" viewBox="0 0 42 30" fill="none" stroke="#fff" strokeWidth="3">
      <path d="M2 10a27 27 0 0 1 38 0M8.500 16a18 18 0 0 1 25 0M14.500 22a9.500 9.500 0 0 1 13 0" />
      <circle cx="21" cy="27" r="3" fill="#fff" stroke="none" />
    </svg>
    <Spacer $w={20} />
    <svg width="18" height="26" viewBox="0 0 18 26">
      <path d="M0 8q0-1 1-1h6l10-7v26L7 19H1q-1 0-1-1z" fill="#fff" />
    </svg>
    <Clock>Mon 12:07</Clock>
    <svg width="32" height="22" viewBox="0 0 32 22">
      <rect width="32" height="22" fill="#fff" />
      {[0, 1, 2, 3, 4, 5, 6].map((i) => (
        <rect key={i} y={i * 3.4} width="32" height="1.700" fill="#b8242c" />
      ))}
      <rect width="15" height="12" fill="#3f4f8c" />
    </svg>
    <Spacer $w={42} />
    <svg width="32" height="32" viewBox="0 0 32 32" fill="none" stroke="#fff" strokeWidth="3">
      <circle cx="13" cy="12" r="10" />
      <path d="M19 20l9 9" strokeWidth="3.500" />
    </svg>
    <Spacer $w={34} />
    <svg width="32" height="32" viewBox="0 0 32 32">
      <circle cx="16" cy="16" r="15" fill="url(#siriBall)" stroke="#e8e8f0" strokeWidth="1.500" />
      <path d="M16 16L4 20M16 16L9 8M16 16l10-5M16 16l4 12M16 16l7 6" stroke="#dffcff" strokeWidth="1.800" />
      <circle cx="16" cy="16" r="4" fill="#fff" opacity=".85" />
    </svg>
    <Spacer $w={24} />
    <svg width="36" height="20" viewBox="0 0 36 20" fill="#fff">
      <path d="M0 0h4v4H0zM8 0h28v4H8zM0 8h4v4H0zM8 8h22v4H8zM0 16h4v4H0zM8 16h28v4H8z" />
    </svg>
  </StatusGroup>
);

const CursorArrow = () => (
  <path
    d="M3607 378v25l5.500-5 4.500 11 5-2-4.500-10.500h7.500z"
    fill="#000"
    stroke="#fff"
    strokeWidth="1.800"
    strokeLinejoin="round"
  />
);

/* ------------------------------------------------------------------ */
/* Dock icons, each drawn on a 128 x 128 board                         */
/* ------------------------------------------------------------------ */

const Board = ({ children }: { children: React.ReactNode }) => (
  <svg width="128" height="128" viewBox="0 0 128 128">
    {children}
  </svg>
);

const HiddenSvg = styled.svg`
  position: absolute;
`;

const SharedDefs = () => (
  <HiddenSvg width="0" height="0">
    <defs>
      <linearGradient id="finderL" x1="0" y1="0" x2="0" y2="1">
        <stop offset="0" stopColor="#1ad2fe" />
        <stop offset="1" stopColor="#1f6ff3" />
      </linearGradient>
      <linearGradient id="finderR" x1="0" y1="0" x2="0" y2="1">
        <stop offset="0" stopColor="#f6f5f6" />
        <stop offset="1" stopColor="#dbe7f4" />
      </linearGradient>
      <radialGradient id="siriBall">
        <stop offset="0" stopColor="#8ff7ff" />
        <stop offset=".45" stopColor="#2c9ad6" />
        <stop offset=".75" stopColor="#7a2aa8" />
        <stop offset="1" stopColor="#d03a9a" />
      </radialGradient>
      <radialGradient id="siriGlow">
        <stop offset="0" stopColor="#fff" />
        <stop offset=".3" stopColor="#c8fbff" stopOpacity=".85" />
        <stop offset="1" stopColor="#7fe6ff" stopOpacity="0" />
      </radialGradient>
      <linearGradient id="siriBg" x1="0" y1="0" x2="0" y2="1">
        <stop offset="0" stopColor="#b01d7c" />
        <stop offset=".35" stopColor="#6c2468" />
        <stop offset=".6" stopColor="#173058" />
        <stop offset="1" stopColor="#0d1a50" />
      </linearGradient>
      <linearGradient id="steel" x1="0" y1="0" x2="0" y2="1">
        <stop offset="0" stopColor="#d5e4eb" />
        <stop offset="1" stopColor="#7f7f7f" />
      </linearGradient>
      <radialGradient id="safariBg">
        <stop offset="0" stopColor="#15cdf7" />
        <stop offset="1" stopColor="#1a62e6" />
      </radialGradient>
      <linearGradient id="sky" x1="0" y1="0" x2="0" y2="1">
        <stop offset="0" stopColor="#2f80dd" />
        <stop offset="1" stopColor="#8cc7f3" />
      </linearGradient>
      <linearGradient id="leather" x1="0" y1="0" x2="0" y2="1">
        <stop offset="0" stopColor="#bd9050" />
        <stop offset="1" stopColor="#a97a3e" />
      </linearGradient>
      <linearGradient id="bubble" x1="0" y1="0" x2="0" y2="1">
        <stop offset="0" stopColor="#5ac5fa" />
        <stop offset="1" stopColor="#1281fb" />
      </linearGradient>
      <linearGradient id="whiteDisc" x1="0" y1="0" x2="0" y2="1">
        <stop offset="0" stopColor="#fbfbfc" />
        <stop offset="1" stopColor="#d9dde2" />
      </linearGradient>
      <linearGradient id="podBg" x1="0" y1="0" x2="0" y2="1">
        <stop offset="0" stopColor="#c869f5" />
        <stop offset="1" stopColor="#7a2bbf" />
      </linearGradient>
      <linearGradient id="tvBg" x1="0" y1="0" x2="0" y2="1">
        <stop offset="0" stopColor="#3a3a3c" />
        <stop offset="1" stopColor="#000" />
      </linearGradient>
      <linearGradient id="storeBg" x1="0" y1="0" x2="0" y2="1">
        <stop offset="0" stopColor="#19c0fd" />
        <stop offset="1" stopColor="#1860ee" />
      </linearGradient>
      <linearGradient id="noteFill" x1="1" y1="0" x2="0" y2="1">
        <stop offset="0" stopColor="#fb4d62" />
        <stop offset=".5" stopColor="#b46ac6" />
        <stop offset="1" stopColor="#7a6cf5" />
      </linearGradient>
      <linearGradient id="keyBg" x1="0" y1="0" x2="0" y2="1">
        <stop offset="0" stopColor="#0a93fb" />
        <stop offset="1" stopColor="#4cc2f6" />
      </linearGradient>
      <linearGradient id="ghBg" x1="0" y1="0" x2="0" y2="1">
        <stop offset="0" stopColor="#a347af" />
        <stop offset="1" stopColor="#4d2475" />
      </linearGradient>
      <linearGradient id="pagesTop" x1="0" y1="0" x2="1" y2="0">
        <stop offset="0" stopColor="#ffa534" />
        <stop offset="1" stopColor="#fb8c12" />
      </linearGradient>
      <linearGradient id="binFill" x1="0" y1="0" x2="1" y2="0">
        <stop offset="0" stopColor="#6f747c" />
        <stop offset=".5" stopColor="#494e58" />
        <stop offset="1" stopColor="#757a80" />
      </linearGradient>
    </defs>
  </HiddenSvg>
);

const Finder = () => (
  <Board>
    <rect x="9.500" y="12" width="110" height="104" rx="6" fill="url(#finderR)" />
    <path d="M67 12C60 32 56 52 55.500 71H71c0 16 1 32 4 45H15.500a6 6 0 0 1-6-6V18a6 6 0 0 1 6-6z" fill="url(#finderL)" />
    <path d="M67 12C60 32 56 52 55.500 71H71c0 16 1 32 4 45" fill="none" stroke="#1c2b52" strokeWidth="1.500" />
    <path d="M40 40v8M89 40v8" stroke="#16243c" strokeWidth="5" strokeLinecap="round" />
    <path d="M32 78c14 19 50 20 65 0" fill="none" stroke="#16243c" strokeWidth="4.500" strokeLinecap="round" />
  </Board>
);

const Siri = () => (
  <Board>
    <circle cx="64" cy="64" r="59.500" fill="#e4e2e6" />
    <circle cx="64" cy="64" r="54" fill="#170f2b" />
    <circle cx="64" cy="64" r="49" fill="url(#siriBg)" />
    <path d="M64 66C40 40 38 22 62 20c30 0 40 20 44 40-14-6-28-4-42 6z" fill="#c82a86" opacity=".55" />
    <path d="M64 66C46 34 28 46 22 70c14-4 28-2 42-4z" fill="#8f8bd8" opacity=".6" />
    <path d="M64 66C52 76 30 96 24 90c2-10 22-20 40-24z" fill="#3fd6dc" opacity=".85" />
    <path d="M64 66c24 0 44 6 44 18-12 6-30-4-44-18z" fill="#3fe0b4" opacity=".85" />
    <path d="M64 66c6 18 16 36 14 48-10-8-14-30-14-48z" fill="#e84aa8" opacity=".85" />
    <path d="M64 66C84 50 100 52 110 58c-16 8-30 8-46 8z" fill="#35bcd0" opacity=".8" />
    <path d="M64 66C54 86 34 100 44 108c14 6 26-18 20-42z" fill="#1a65b8" opacity=".7" />
    <path d="M64 64L26 92 60 62 46 42 66 58l4-30 0 30 28 4-28 4 8 34-12-30z" fill="#d6fdff" opacity=".6" />
    <circle cx="64" cy="65" r="20" fill="url(#siriGlow)" />
  </Board>
);

const Launchpad = () => (
  <Board>
    <circle cx="64" cy="64" r="59.500" fill="#c9d3d8" />
    <circle cx="64" cy="64" r="54" fill="url(#steel)" />
    <path
      d="M99 28C78 32 62 42 55 60c-12 0-20 3-27 11l15 3c2 1 6 3 7 6l10 25c6-7 11-16 9-27C88 66 98 48 99 28z"
      fill="#404346"
    />
    <circle cx="77" cy="52" r="7" fill="#a9b8c0" stroke="#6d777c" strokeWidth="1" />
    <path d="M38 80c-7 4-10 12-9 21 7-1 12-5 16-12z" fill="#404346" />
  </Board>
);

const Safari = () => (
  <Board>
    <circle cx="64" cy="64" r="59.500" fill="#f0eeee" />
    <circle cx="64" cy="64" r="55" fill="url(#safariBg)" />
    {Array.from({ length: 60 }, (_, i) => (
      <path
        key={i}
        transform={`rotate(${i * 6} 64 64)`}
        d={i % 2 ? "M64 12v5" : "M64 12v9"}
        stroke="#e7f4fd"
        strokeWidth="1.200"
      />
    ))}
    <path d="M102 27L58.500 58l12 11z" fill="#e8322c" />
    <path d="M102 27L64 64l6.500 5z" fill="#b71616" />
    <path d="M29 99l29.500-41 12 11z" fill="#e9e5e2" />
    <path d="M29 99l35-35 6.500 5z" fill="#b3b0af" />
  </Board>
);

const Chrome = () => (
  <Board>
    <circle cx="64" cy="64" r="62" fill="#15a05d" />
    <path d="M64 36h55.300A62 62 0 0 0 11 32l28 46z" fill="#dc4b3e" />
    <path d="M64 36h55.300A62 62 0 0 1 60 126l28-48z" fill="#ffcd42" />
    <circle cx="64" cy="64" r="28.500" fill="#f1f1f1" />
    <circle cx="64" cy="64" r="23" fill="#4b86ee" />
  </Board>
);

const Mail = () => (
  <Board>
    <path d="M10.500 14L100 1l17 112-87 13z" fill="#f8f8f6" stroke="#f8f8f6" strokeWidth="4" strokeDasharray="3.600 2.600" />
    <path d="M18 21.500L94.500 10l15 96L32 117.500z" fill="url(#sky)" />
    <path d="M26 26c6-2 10 8 14 18 3 8 6 14 10 18l6-5c4-1 7 1 8 5 0 5 4 9 8 12 8 2 16 6 20 12 4 4 6 10 8 16-12-2-22-6-30-14-2 8-6 14-10 14-8-2-18-12-20-18 2-4 6-4 10-4-2-6-4-8-8-12-8-10-16-26-16-42z" fill="#6f5430" />
    <path d="M26 26c8 0 12 12 15 24l-4 8c-8-10-13-20-11-32z" fill="#cfc8ba" />
    <path d="M36 78l12-2 10 14-2 10c-8-4-18-14-20-22z" fill="#c49a5c" />
    <circle cx="58" cy="60" r="3.500" fill="#f3efe6" />
    <g fill="none" stroke="#54708f" strokeWidth="1.300" opacity=".7">
      <circle cx="98" cy="94" r="28" />
      <circle cx="98" cy="94" r="19" />
    </g>
    <circle cx="98" cy="96" r="9" fill="#4a7299" opacity=".7" />
  </Board>
);

const Contacts = () => (
  <Board>
    <path d="M92 10l9 1 2 24-9 3z" fill="#c9ced3" />
    <path d="M94 35l10-1 2 24-9 2z" fill="#5cc3ee" />
    <path d="M97 58l9-1 3 22-9 2z" fill="#53d06f" />
    <path d="M100 80l14-1 2 21-14 3z" fill="#eaa417" />
    <path d="M28 125l-3-6 85-12 1 5z" fill="#5b3c16" />
    <path d="M9.500 11.500L86-1q7-1 8 6l17 99q1 6-5 7l-77 12q-5 0-6-5z" fill="url(#leather)" />
    <path d="M14 11l18 112-4 1Q25 124 24 118L9.500 11.500z" fill="#9c6f35" opacity=".6" />
    <circle cx="62" cy="54" r="29" fill="none" stroke="#8e6731" strokeWidth="2" />
    <ellipse cx="62" cy="45" rx="10" ry="12" fill="#94703a" />
    <path d="M42 74c2-18 38-22 44-5-8 18-34 20-44 5z" fill="#94703a" />
  </Board>
);

const Calendar = () => (
  <Board>
    <path d="M6 25l94-14 17 96-98 15z" fill="#5c6b76" />
    <path d="M20 118l96-14v4l-97 15z" fill="#2d353b" />
    <path d="M8.500 19L95.500 6l16 96-87 14z" fill="#f4f4f4" />
    <path d="M22 108l88-13 1.500 7-87 14z" fill="#c4c6c8" />
    <path d="M8.500 19L95.500 6l4.500 26-87 14z" fill="#e5524a" />
    <g transform="rotate(-8.500 60 60)" textAnchor="middle" fontFamily="Roboto, sans-serif">
      <text x="58" y="32" fontSize="24" fill="#fff">JAN</text>
      <text x="62" y="91" fontSize="56" fontWeight="300" fill="#222">27</text>
    </g>
  </Board>
);

const Notes = () => (
  <Board>
    <path d="M11.500 15L100 1.500l18 110L28 125z" fill="#fbfbfa" />
    <path d="M11.500 15L100 1.500l3 19L14 34z" fill="#fdcf2b" />
    <path d="M14 34l89-13.500" stroke="#b9a24e" strokeWidth="1.500" strokeDasharray="2 2" />
    {Array.from({ length: 9 }, (_, i) => (
      <path key={i} d={`M${16 + i * 1.4} ${45 + i * 9}l88-13.500`} stroke="#b5b5b2" strokeWidth="1.200" />
    ))}
    <path d="M28 125l90-13.500v2L28 127z" fill="#c99a10" />
  </Board>
);

const Reminders = () => (
  <Board>
    <path d="M31 124l84-13-1-4-84 12z" fill="#2c2f33" />
    <path d="M14 21q0-6 6-7L91 3q6-1 7 5l15 96q1 6-5 7l-71 10q-6 1-7-5z" fill="#f6f6f6" />
    {[
      [30, 34, "#3f82f2"],
      [33, 55, "#e5534b"],
      [35.5, 76, "#f1a23b"],
      [39, 98, "#5a6169"],
    ].map(([x, y, c]) => (
      <g key={String(c)}>
        <circle cx={x} cy={y} r="9" fill="none" stroke="#9da1a6" strokeWidth="1" />
        <circle cx={x} cy={y} r="6.500" fill={String(c)} />
        <path d={`M${Number(x) + 13} ${Number(y) - 2}l50-7.500`} stroke="#9b9b9b" strokeWidth="1.400" />
      </g>
    ))}
  </Board>
);

const Maps = () => (
  <Board>
    <path d="M4.500 24L100.500 8l13 98L19 120z" fill="#fdfdfd" />
    <path d="M11 27l84-14 10 88-79 13z" fill="#e7e4dc" />
    <path d="M60 19l35-6 4 33c-20 0-34-10-39-27z" fill="#a3dc7c" />
    <path d="M46 21l8-1c6 26 18 44 48 54l1 14C70 84 50 60 46 21z" fill="#a3dc7c" />
    <path d="M12 40l60 58-2 9L14 53z" fill="#fdcd3b" stroke="#e5a01f" strokeWidth="1.200" />
    <path d="M17 66l22 22 4 24-17 2z" fill="#f5bccb" />
    <path d="M27 25l12-2 3 44-12 2z" fill="#2b87da" stroke="#fff" strokeWidth="1.500" />
    <circle cx="38" cy="76" r="16" fill="#0f74da" />
    <path d="M38 62l8 24-8-6-8 6z" fill="#fff" />
    <circle cx="97" cy="88" r="29.500" fill="#f3f3f3" />
    <circle cx="97" cy="88" r="17" fill="none" stroke="#5f8ca6" strokeWidth="2" />
    <path d="M97 61l3.500 7h-7z" fill="#dc2b2b" />
    <path d="M97 110v4M72 88h4M118 88h4" stroke="#222" strokeWidth="1.500" />
    <text x="97" y="95" fontSize="19" textAnchor="middle" fontFamily="Roboto, sans-serif" fill="#111">3D</text>
  </Board>
);

const Petal = styled.rect`
  mix-blend-mode: multiply;
`;

const Photos = () => (
  <Board>
    <circle cx="64" cy="64" r="59.500" fill="url(#whiteDisc)" />
    {["#fb9a28", "#f3e11b", "#c2db3a", "#6fc392", "#6bb1e6", "#a08dd0", "#dd7fa8", "#f4675a"].map((c, i) => (
      <Petal key={c} x="51" y="13.500" width="26" height="47" rx="13" fill={c} transform={`rotate(${i * 45} 64 64)`} />
    ))}
  </Board>
);

const Messages = () => (
  <Board>
    <path d="M64 10.500c33 0 59 21 59 48s-26 50-59 50c-6 0-10 0-15-2-5 5-14 9-23 9 5-4 8-10 9-15C16 92 5 76 5 59c0-27 26-48.500 59-48.500z" fill="url(#bubble)" />
    <path d="M84 57.500c20 0 35 13 35 30 0 9-4 17-11 22 0 4 1 8 4 11-6-1-11-3-15-6-4 1-8 2-13 2-20 0-35-12-35-29s15-30 35-30z" fill="#e9f2fa" />
    <g fill="#1159a8">
      <circle cx="69" cy="87.500" r="6" />
      <circle cx="86" cy="87.500" r="6" />
      <circle cx="104" cy="87.500" r="6" />
    </g>
  </Board>
);

const Pages = () => (
  <Board>
    <path d="M9.500 15L100 1.500 117 111 28 125z" fill="#fbfbfb" />
    <path d="M9.500 15L100 1.500l3 20L12.500 35z" fill="url(#pagesTop)" />
    <text x="18" y="29" fontSize="15" fill="#fff" fontFamily="Roboto, sans-serif" transform="rotate(-8.500 18 29)">PAGES</text>
    <path d="M22.500 40l45-6.500 4 32L26 71z" fill="#2f9fe0" />
    <path d="M34 42l8 6 6-8 5 7 7-3c1 10-4 17-11 18-8 0-14-8-15-20z" fill="#f6921e" />
    <path d="M48 62l1 7" stroke="#2c8c3c" strokeWidth="2" />
    {Array.from({ length: 8 }, (_, i) => (
      <path key={i} d={`M${72 + i * 0.7} ${38 + i * 4.3}l24-3.600`} stroke="#8a8a8a" strokeWidth="1.500" />
    ))}
    {Array.from({ length: 10 }, (_, i) => (
      <path key={i} d={`M${27 + i * 0.8} ${78 + i * 4.7}l${i === 4 ? 40 : 76}-${i === 4 ? 6 : 11.4}`} stroke="#8a8a8a" strokeWidth="1.500" />
    ))}
    <path d="M107 2q8-1 9 5L93 92l-8-3z" fill="#f0982b" />
    <path d="M110 2q6 0 6 5L93 92l-3-1z" fill="#c36f12" />
    <path d="M85 88l8 3-9 22-5-2z" fill="#3b3b3d" />
    <path d="M80 110l4 2-9 13z" fill="#aeb4ba" />
  </Board>
);

const Numbers = () => (
  <Board>
    <path d="M9 71h110l4 47H6z" fill="#fafafa" />
    <path d="M6 118h117v3H6z" fill="#b9b9bb" />
    {[
      [23, 64, "#e0374a", "#f1737f"],
      [46, 41, "#f5811f", "#fdb04b"],
      [69.500, 9, "#1fbb3c", "#74e08a"],
      [93.500, 28, "#1f8df5", "#69c4fb"],
    ].map(([x, y, c, t]) => (
      <g key={String(c)}>
        <rect x={x} y={y} width="21" height={107 - Number(y)} rx="2" fill={String(c)} />
        <rect x={x} y={y} width="21" height="7" rx="2" fill={String(t)} />
      </g>
    ))}
    <g fontSize="6.500" fill="#555" fontFamily="Roboto, sans-serif">
      <text x="13" y="79">1</text>
      <text x="13" y="88">2</text>
      <text x="12" y="97">3</text>
      <text x="12" y="106">4</text>
      <text x="11" y="115">5</text>
    </g>
  </Board>
);

const Keynote = () => (
  <Board>
    <rect x="61" y="54" width="6" height="60" fill="#a9b0b6" />
    <ellipse cx="64" cy="117" rx="25" ry="10" fill="#9db2c4" />
    <ellipse cx="64" cy="114" rx="25" ry="7.500" fill="#c8d4dd" />
    <path d="M20 6h89l6 43H12z" fill="url(#keyBg)" />
    <path d="M12 49h104l1 6H10.500z" fill="#2397d6" />
    <path d="M30 12h66l3 32H28z" fill="#fdfdfd" />
    <text x="36" y="20" fontSize="8" fontFamily="Roboto, sans-serif" fill="#222">KEYNOTE</text>
    <circle cx="50" cy="32" r="11" fill="#74d14d" />
    <path d="M50 32V21a11 11 0 0 1 11 11z" fill="#e474d8" />
    <path d="M50 32h11a11 11 0 0 1-6 9z" fill="#fbc53a" />
    <path d="M50 32l-9 6a11 11 0 0 1 9-17z" fill="#3b9be8" />
    {["#3b9be8", "#e474d8", "#e5524a", "#fbc53a", "#74d14d"].map((c, i) => (
      <g key={c}>
        <rect x="69" y={24 + i * 3.6} width="3" height="2" fill={c} />
        <rect x="74" y={24 + i * 3.6} width="14" height="1.500" fill="#999" />
      </g>
    ))}
  </Board>
);

const News = () => (
  <Board>
    <circle cx="64" cy="64" r="58.500" fill="#bcc1c7" />
    <circle cx="64" cy="62" r="57" fill="url(#whiteDisc)" />
    <path d="M33 33h21l41 49v13H74L33 46zM70 33h23q2 0 2 2v27zM33 66v27q0 2 2 2h24z" fill="#fb3c5a" />
  </Board>
);

const Music = () => (
  <Board>
    <circle cx="64" cy="64" r="58.500" fill="#b8bcc4" />
    <circle cx="64" cy="62" r="56" fill="url(#whiteDisc)" />
    <path
      d="M50 37q0-4 4-5l32-7q4-1 4 3v51c0 8-4 13-11 13-6 0-10-3-10-8 0-6 5-9 10-10 4-1 6-2 6-5V45l-29 6v36c0 8-5 12-11 12-6 0-10-3-10-8 0-6 5-9 10-10 4-1 5-3 5-6z"
      fill="url(#noteFill)"
    />
  </Board>
);

const Podcasts = () => (
  <Board>
    <circle cx="64" cy="64" r="59" fill="#5a148f" />
    <circle cx="64" cy="63" r="58.500" fill="url(#podBg)" opacity=".8" />
    <circle cx="64" cy="64" r="53" fill="url(#podBg)" />
    <g fill="none" stroke="#f3e9fa" strokeWidth="5">
      <path d="M44 94a36 36 0 1 1 40 0" />
      <path d="M50 82a24 24 0 1 1 28 0" />
    </g>
    <circle cx="64" cy="61" r="9" fill="#f3e9fa" />
    <path d="M55 80q0-7 9-7t9 7l-3 22q-1 6-6 6t-6-6z" fill="#f3e9fa" />
  </Board>
);

const AppleTv = () => (
  <Board>
    <circle cx="64" cy="64" r="59" fill="#262628" />
    <circle cx="64" cy="64" r="54" fill="url(#tvBg)" />
    <FaApple x={22} y={41} size={38} color="#fff" />
    <text x="59" y="79" fontSize="46" fontWeight="400" fontFamily="Inter, sans-serif" fill="#fff" letterSpacing="-1">tv</text>
  </Board>
);

const AppStore = () => (
  <Board>
    <circle cx="64" cy="64" r="59.500" fill="#0f4fd8" />
    <circle cx="64" cy="62.500" r="58" fill="url(#storeBg)" />
    <circle cx="64" cy="63" r="53" fill="none" stroke="#fff" strokeOpacity=".12" strokeWidth="2" />
    <g stroke="#f3f6fa" strokeWidth="10" strokeLinecap="round" fill="none">
      <path d="M72 30L46 75M57 30l11 19 22 38" />
      <path d="M31 72h30M76 72h21M41 84l-4 6" />
    </g>
    <circle cx="108.500" cy="21" r="26" fill="#f0423a" />
    <text x="108.500" y="33" fontSize="34" textAnchor="middle" fontFamily="Inter, sans-serif" fill="#fff">4</text>
  </Board>
);

const Preferences = () => (
  <Board>
    <rect x="5.500" y="9" width="118" height="110" rx="7" fill="url(#steel)" />
    <circle cx="64" cy="64" r="48" fill="#17181a" />
    <circle cx="64" cy="64" r="38" fill="none" stroke="#a5a5a5" strokeWidth="9" strokeDasharray="5.400 4.550" />
    <circle cx="64" cy="64" r="31.500" fill="none" stroke="#a5a5a5" strokeWidth="10" />
    <circle cx="64" cy="64" r="27" fill="#4b4b4b" />
    <path d="M64 64h28M64 64L48 40M64 64L48 88" stroke="#b3b3b1" strokeWidth="7" />
    <circle cx="64" cy="64" r="7" fill="#b3b3b1" />
    <circle cx="64" cy="64" r="3.500" fill="#444" />
  </Board>
);

const Epic = () => (
  <Board>
    <path d="M6.500 2q0-6 6-6h104q6 0 6 6v104q0 4-3 6l-55 20L9.500 112q-3-2-3-6z" fill="#000" />
    <g fill="#e1e1e1" fontFamily="Roboto, sans-serif" fontWeight="900">
      <text x="0" y="0" fontSize="74" textLength="86" lengthAdjust="spacingAndGlyphs" transform="translate(21 66)">EPIC</text>
      <text x="0" y="0" fontSize="22" textLength="86" lengthAdjust="spacingAndGlyphs" transform="translate(21 95.500)">GAMES</text>
    </g>
    <path d="M42 113h44l-22 8z" fill="#e1e1e1" />
  </Board>
);

const Preview = () => (
  <Board>
    <rect x="16" y="11" width="102" height="84" fill="#f1efe9" />
    <rect x="20" y="14" width="94" height="78" fill="#a68350" />
    <path d="M20 14h94v12H20z" fill="#86683c" />
    <path d="M2 33L100 18l14 80L14 114z" fill="#f8f8f8" />
    <path d="M8 36l88-13 12 70-90 14z" fill="#6fa5dc" />
    <path d="M8 36l88-13 3 14-88 17z" fill="#9cc3ee" />
    <path d="M11 56l88-14 6 34-88 16z" fill="#27509a" />
    <path d="M17 86c20-14 40-8 56-16s22-4 32-2l3 25-90 14z" fill="#9fb9cc" />
    <path d="M16 100c10-14 18-18 30-10 6 8 12 10 20 9l-48 8z" fill="#7c5a43" />
    <path d="M18 80l20-6 14 14 26-4 10-8-6 18-26 2-14 6-14-12z" fill="#eef3f6" />
    <path d="M78 80h46l-3 32q-2 8-20 8t-19-8z" fill="#8b7158" />
    <ellipse cx="101" cy="76" rx="24" ry="25" fill="#3c4148" />
    <ellipse cx="101" cy="75" rx="23" ry="23" fill="none" stroke="#c8ccd0" strokeWidth="3" />
    <ellipse cx="101" cy="75" rx="18" ry="19" fill="#c4d8e6" />
    <path d="M84 82c8-12 20-8 34-6-2 12-10 18-18 18s-14-6-16-12z" fill="#9a7558" />
  </Board>
);

const GithubDesktop = () => (
  <Board>
    <circle cx="64" cy="64" r="63.500" fill="#fff" />
    <circle cx="64" cy="64" r="58.500" fill="#efeef0" />
    <FaGithub x={3.5} y={3.5} size={121} color="#772f92" />
    <circle cx="64" cy="64" r="61" fill="none" stroke="#fff" strokeWidth="5" />
  </Board>
);

const DocumentStack = () => (
  <Board>
    <path d="M108 26h8v72h-8z" fill="#4aa3cf" />
    <path d="M29-3h40l14 20H29z" fill="#f2f2f2" />
    <path d="M58-3h10v16H58z" fill="#31363a" />
    <path d="M17 12h72l20 26v88H17z" fill="#fcfcfc" />
    <path d="M70 12l8-2 32 32c-14-2-24-8-28-14z" fill="#dedede" />
    <rect x="38" y="22" width="46" height="4" fill="#3a3a3a" />
    {Array.from({ length: 26 }, (_, i) => (
      <path key={i} d={`M26 ${34 + i * 3.4}h34M66 ${34 + i * 3.4}h36`} stroke={i % 9 === 6 ? "#6aa0cc" : "#8f8f8f"} strokeWidth="1.500" />
    ))}
    {Array.from({ length: 13 }, (_, i) => (
      <rect key={i} x="14" y={18 + i * 8.2} width="7" height="3.500" rx="1.700" fill="#111" />
    ))}
  </Board>
);

const MinimizedWindow = () => (
  <Board>
    <rect x="0" y="20" width="128" height="87" fill="#fdfdfd" />
    <rect x="0" y="20" width="128" height="10" fill="#24292e" />
    <g fill="#cfd3d7">
      <rect x="4" y="25" width="12" height="1.500" />
      <rect x="34" y="25" width="12" height="1.500" />
      <rect x="62" y="25" width="18" height="1.500" />
    </g>
    <circle cx="3" cy="22" r="1.300" fill="#ff5a52" />
    <circle cx="6" cy="22" r="1.300" fill="#e6c029" />
    <circle cx="9" cy="22" r="1.300" fill="#54c22b" />
    <rect x="0" y="30" width="32" height="77" fill="#f5f7f9" />
    <rect x="0" y="32" width="16" height="1.500" fill="#3b7dd8" />
    <rect x="1" y="103" width="30" height="3" fill="#5f9be0" />
    <rect x="40" y="37" width="30" height="3" fill="#333" />
    <g fill="#b3b7bb">
      <rect x="40" y="43" width="66" height="1.300" />
      <rect x="42" y="54" width="32" height="1.300" />
      <rect x="42" y="58" width="22" height="1.300" />
      <rect x="42" y="67" width="34" height="1.300" />
      <rect x="42" y="71" width="20" height="1.300" />
      <rect x="42" y="79" width="34" height="1.300" />
      <rect x="103" y="56" width="13" height="2" />
      <rect x="105" y="68" width="11" height="2" />
      <rect x="105" y="78" width="11" height="2" />
    </g>
    <circle cx="105" cy="105" r="23.500" fill="#fff" />
    <FaGithub x={83} y={83} size={44} color="#772f92" />
  </Board>
);

const Trash = () => (
  <Board>
    <path d="M16 16l13 98q3 10 35 10t34-10l14-98z" fill="url(#binFill)" opacity=".85" />
    <ellipse cx="64" cy="16" rx="48" ry="11.500" fill="#414955" stroke="#80868f" strokeWidth="1.500" />
    <path d="M28 106q14 12 24 16-18-1-22-8z" fill="#b9bdc1" opacity=".7" />
  </Board>
);

type DockEntry = { id: string; icon: React.ReactElement; running?: boolean } | null;

const dockEntries: DockEntry[] = [
  { id: "finder", icon: <Finder />, running: true },
  { id: "siri", icon: <Siri /> },
  { id: "launchpad", icon: <Launchpad /> },
  { id: "safari", icon: <Safari /> },
  { id: "chrome", icon: <Chrome />, running: true },
  { id: "mail", icon: <Mail /> },
  { id: "contacts", icon: <Contacts /> },
  { id: "calendar", icon: <Calendar /> },
  { id: "notes", icon: <Notes /> },
  { id: "reminders", icon: <Reminders /> },
  { id: "maps", icon: <Maps /> },
  { id: "photos", icon: <Photos /> },
  { id: "messages", icon: <Messages /> },
  { id: "pages", icon: <Pages /> },
  { id: "numbers", icon: <Numbers /> },
  { id: "keynote", icon: <Keynote /> },
  { id: "news", icon: <News /> },
  { id: "music", icon: <Music /> },
  { id: "podcasts", icon: <Podcasts /> },
  { id: "tv", icon: <AppleTv /> },
  { id: "appstore", icon: <AppStore /> },
  { id: "preferences", icon: <Preferences /> },
  null,
  { id: "epic", icon: <Epic /> },
  { id: "preview", icon: <Preview /> },
  { id: "github", icon: <GithubDesktop />, running: true },
  null,
  { id: "documents", icon: <DocumentStack /> },
  { id: "window", icon: <MinimizedWindow /> },
  { id: "trash", icon: <Trash /> },
];

/* ------------------------------------------------------------------ */
/* Sections                                                            */
/* ------------------------------------------------------------------ */

const menuItems: [string, number][] = [
  ["File", 44],
  ["Edit", 48],
  ["View", 62],
  ["History", 92],
  ["Bookmarks", 142],
  ["People", 89],
  ["Tab", 45],
  ["Window", 102],
  ["Help", 60],
];

const TopMenu = () => (
  <MenuBar>
    <MenuGroup>
      <FaApple size={31} />
      <MenuItem $bold $w={108}>Chrome</MenuItem>
      {menuItems.map(([label, w]) => (
        <MenuItem key={label} $w={w}>{label}</MenuItem>
      ))}
    </MenuGroup>
    <StatusIcons />
  </MenuBar>
);

const BrowserTabs = () => (
  <TabStrip>
    <TrafficLights>
      <Light $c="#ff5a52" />
      <Light $c="#e6c029" />
      <Light $c="#54c22b" />
    </TrafficLights>
    <Tab $active>
      <MdPublic size={33} color="#5f6064" />
      <TabTitle>Congnostics</TabTitle>
      <MdClose size={28} />
    </Tab>
    <Tab>
      <FaGithub size={32} color="#141414" />
      <TabTitle $fade>BaoDNguyen/Weekly-Reports: W</TabTitle>
      <MdClose size={28} />
    </Tab>
    <TabDivider />
    <NewTab>
      <MdAdd size={38} />
    </NewTab>
  </TabStrip>
);

const AddressBar = () => (
  <Toolbar>
    <NavButtons>
      <MdArrowBack size={40} />
      <MdArrowForward size={40} color="#84868a" />
      <MdRefresh size={40} />
    </NavButtons>
    <Omnibox>
      <FaLock size={22} color="#e8eaed" />
      <Url>
        idatavisualizationlab.github.io<UrlPath>/B/congnostics/layout.html</UrlPath>
      </Url>
      <MdStarBorder size={36} color="#c4c6c9" />
    </Omnibox>
    <ExtensionBadge>{"{..}"}</ExtensionBadge>
    <ToolDivider />
    <MdAccountCircle size={46} />
    <Spacer $w={36} />
    <svg width="8" height="28" viewBox="0 0 8 28" fill="#f1f3f4">
      <circle cx="4" cy="4" r="3.300" />
      <circle cx="4" cy="14" r="3.300" />
      <circle cx="4" cy="24" r="3.300" />
    </svg>
    <Spacer $w={14} />
  </Toolbar>
);

const SelectField = ({ label, labelWidth, value }: { label: string; labelWidth: number; value: string }) => (
  <Field>
    <FieldLabel $w={labelWidth}>{label}</FieldLabel>
    <SelectBox>
      {value}
      <SelectArrows />
    </SelectBox>
  </Field>
);

const SettingsSidebar = () => (
  <Sidebar>
    <Panel>
      <SectionHeader $first>
        <MdSettings size={50} />
        <SectionTitle>Setting</SectionTitle>
      </SectionHeader>
      <SettingBody>
        <SelectField label="Dataset:" labelWidth={305} value="US Employment Data" />
        <SelectField label="Types of analysis" labelWidth={305} value="One dimension" />
        <SelectField label="Visualizing:" labelWidth={305} value="UMAP" />
        <MeasureHead>
          <span>
            Choose
            <br />
            measure
          </span>
          <span>Measure name</span>
          <span>Filter</span>
        </MeasureHead>
        <MeasureList>
          {measures.map(([name, color], i) => (
            <MeasureRow key={name}>
              <Radio $on={i === 0} />
              <MeasureName $c={color}>{name}</MeasureName>
              <Checkbox />
              <RangeSlider />
            </MeasureRow>
          ))}
        </MeasureList>
        <Legend>
          <LegendItem $c={GREEN}>Measures for extracting patterns</LegendItem>
          <LegendItem $c={ORANGE}>Statistics of time series</LegendItem>
          <LegendItem $c={BLUE}>Statistics of net series</LegendItem>
        </Legend>
      </SettingBody>
      <SectionHeader>
        <SectionIcon>
          <MouseIcon />
        </SectionIcon>
        <SectionTitle>Interaction</SectionTitle>
        <Chevron dir="down" />
      </SectionHeader>
      <InteractionBody>
        <ChartPicker>
          <PickerLabel>Display charts</PickerLabel>
          <PickerButton $on>
            <MdTimeline size={48} />
          </PickerButton>
          <PickerButton>
            <PetalIcon />
          </PickerButton>
        </ChartPicker>
        <SelectField label="Data Instances:" labelWidth={243} value="--none--" />
        <SelectField label="Variables:" labelWidth={243} value="--none--" />
      </InteractionBody>
      <SectionHeader>
        <SectionIcon>
          <RadarIcon />
        </SectionIcon>
        <SectionTitle>Radar Controller</SectionTitle>
        <Chevron dir="right" />
      </SectionHeader>
      <SectionHeader>
        <SectionIcon>
          <MdGroupWork size={51} />
        </SectionIcon>
        <SectionTitle>
          Major host groups
          <SectionNote>(by the 10 metrics)</SectionNote>
        </SectionTitle>
        <Chevron dir="right" />
      </SectionHeader>
    </Panel>
    <CollapseButton>
      <Chevron dir="left" color="#fff" />
    </CollapseButton>
  </Sidebar>
);

const RunInfo = () => (
  <InfoTable>
    <InfoHeading>Input</InfoHeading>
    <InfoRow $strong>
      <InfoName>#Radars</InfoName>
      <InfoValue>1727</InfoValue>
    </InfoRow>
    <InfoHeading>Setting</InfoHeading>
    <InfoRow $h={66}>
      <InfoName $lh={28.5}>{"Minimum distanc\ne"}</InfoName>
      <InfoSlider $stub={11} />
    </InfoRow>
    <InfoRow>
      <InfoName>#Neighbors</InfoName>
      <InfoSlider $stub={5} />
    </InfoRow>
    <InfoRow $h={44} $strong>
      <InfoName $lh={42}>Draw link</InfoName>
      <InfoCheck>
        <svg width="24" height="24" viewBox="0 0 24 24">
          <path d="M5 14l3.500-2 2.500 3 8-9.500 3 .5-10 14z" fill="#f1e8ea" />
        </svg>
      </InfoCheck>
    </InfoRow>
    <InfoHeading>Output</InfoHeading>
    <InfoRow>
      <InfoName>#Iterations</InfoName>
      <InfoValue>1000</InfoValue>
    </InfoRow>
    <InfoRow>
      <InfoName>Time per step</InfoName>
      <InfoValue>_</InfoValue>
    </InfoRow>
    <InfoRow>
      <InfoName>Total time</InfoName>
      <InfoValue>5 seconds</InfoValue>
    </InfoRow>
  </InfoTable>
);

/* The canvas starts 790 from the left edge and 304 from the top of the screen. */
const CX = 790;
const CY = 304;

const pathOf = (pts: [number, number][]) => "M" + pts.map((p) => p.join(" ")).join("L");

const miniFrames: [number, number, number, number][] = [
  [360, 540, 370, 180],
  [387, 547, 371, 191],
  [313, 611, 371, 190],
  [315, 650, 369, 188],
  [258, 742, 371, 188],
];

const miniLine = `275 890 280 915 284 880 293 770 298 875 306 880 312 865 335 852 345 862 355 855 372 868 405 878 430 855 439 800 444 840 450 838 456 752 461 830 470 848 485 855 495 842 505 870 512 885 525 875 542 878 555 858 595 858 600 875 610 880`;

const MiniFrame = ({ at }: { at: [number, number, number, number] }) => (
  <rect
    x={3300 + at[0] / 3 - CX}
    y={1040 + at[1] / 3 - CY}
    width={at[2] / 3}
    height={at[3] / 3}
    fill="#fff"
    stroke="#37a537"
    strokeWidth="3.500"
  />
);

const Scatter = () => (
  <Plot width="4304" height="2396" viewBox="0 0 4304 2396">
    <defs>
      <linearGradient id="miniStroke" gradientUnits="userSpaceOnUse" x1="2601" y1="0" x2="2715" y2="0">
        <stop offset="0" stopColor="#0000ff" />
        <stop offset=".47" stopColor="#000" />
        <stop offset="1" stopColor="#ff0000" />
      </linearGradient>
    </defs>
    {clusters.map((c, k) => (
      <g key={k} fill={c.color} fillOpacity=".78">
        {toPoints(c.raw, c.grid, CX, CY).map(([x, y], i) => (
          <circle key={i} cx={x} cy={y} r="6.400" />
        ))}
      </g>
    ))}
    <MiniFrame at={miniFrames[0]} />
    <MiniFrame at={miniFrames[1]} />
    <g fill="none" strokeWidth="3">
      <path d={pathOf(toPoints("422 560 422 620", peakGrid, CX, CY))} stroke="#1515ee" />
      <path d={pathOf(toPoints("586 582 586 620", peakGrid, CX, CY))} stroke="#251313" />
      <path d={pathOf(toPoints("686 712 700 716 715 722 730 716 734 700 740 698", peakGrid, CX, CY))} stroke="#e42222" />
    </g>
    <MiniFrame at={miniFrames[2]} />
    <path d={pathOf(toPoints("511 626 511 650", peakGrid, CX, CY))} stroke="#251313" strokeWidth="3" />
    <MiniFrame at={miniFrames[3]} />
    <g fill="none" strokeWidth="3.500">
      <path d={pathOf(toPoints("348 660 348 742", peakGrid, CX, CY))} stroke="#1515ee" />
      <path d={pathOf(toPoints("512 680 512 742", peakGrid, CX, CY))} stroke="#251313" />
      <path d={pathOf(toPoints("630 760 640 760 643 710 644 758 652 765 660 758 664 752", peakGrid, CX, CY))} stroke="#ee1a1a" />
    </g>
    <MiniFrame at={miniFrames[4]} />
    <path d={pathOf(toPoints(miniLine, peakGrid, CX, CY))} fill="none" stroke="url(#miniStroke)" strokeWidth="3" />
  </Plot>
);

const BOX_X = 3814;

const SeriesList = () => (
  <SeriesPanel>
    {series.map((s, i) => (
      <SeriesRow key={s.name} $h={s.height}>
        <AxisLabel>{"Federal\nGovernment"}</AxisLabel>
        <SeriesBox $first={i === 0} $last={i === series.length - 1}>
          {s.name}
          <SeriesSvg width="1080" height="197" viewBox="0 0 1080 197">
            <defs>
              <linearGradient id="seriesStroke" gradientUnits="userSpaceOnUse" x1="54" y1="0" x2="1010" y2="0">
                <stop offset="0" stopColor="#1a1aff" />
                <stop offset=".5" stopColor="#101010" />
                <stop offset="1" stopColor="#ff1a1a" />
              </linearGradient>
            </defs>
            <path
              d={pathOf(toPoints(s.raw, seriesGrid, BOX_X, s.top + 3))}
              fill="none"
              stroke="url(#seriesStroke)"
              strokeWidth="2.400"
              strokeLinejoin="round"
            />
          </SeriesSvg>
        </SeriesBox>
        <RemoveButton $first={i === 0}>
          <svg width="24" height="24" viewBox="0 0 24 24">
            <path d="M4 4l16 16M20 4L4 20" stroke="#eee" strokeWidth="2" />
          </svg>
        </RemoveButton>
      </SeriesRow>
    ))}
  </SeriesPanel>
);

/* Value and date tips of the hovered point, with the pointer on top. */
const HoverLayer = () => (
  <Plot width="4304" height="2396" viewBox="0 0 4304 2396">
    <g fontFamily={pageFont} fontSize="20" fontWeight="700">
      <path d="M3602 220l10-9h52v22h-50l-4-5z" fill="#000" />
      <text x="3616" y="229" fill="#fff">65.7</text>
      <path d="M3602 413l12 8h38v23h-99v-23h37z" fill="#000" />
      <text x="3557" y="439" fill="#fff">May 2010</text>
    </g>
    <CursorArrow />
  </Plot>
);

export default function App() {
  return (
    <>
      <GlobalStyle />
      <Desktop>
        <SharedDefs />
        <TopMenu />
        <BrowserWindow>
          <BrowserTabs />
          <AddressBar />
          <PageFrame>
            <PageColumn>
              <PageHeader>
                <HeaderTab>Congnostics</HeaderTab>
                <DarkButton>
                  <MdBrightness6 size={48} />
                  Dark
                </DarkButton>
              </PageHeader>
              <PageBody>
                <SettingsSidebar />
                <Canvas>
                  <RunInfo />
                  <Scatter />
                  <SeriesList />
                  <HoverLayer />
                </Canvas>
              </PageBody>
              <HorizontalTrack>
                <HorizontalThumb />
              </HorizontalTrack>
            </PageColumn>
            <VerticalTrack>
              <VerticalThumb />
            </VerticalTrack>
          </PageFrame>
        </BrowserWindow>
        <Dock>
          {dockEntries.map((e, i) =>
            e ? (
              <DockItem key={e.id} $running={e.running}>
                {e.icon}
              </DockItem>
            ) : (
              <DockDivider key={i} />
            ),
          )}
        </Dock>
      </Desktop>
    </>
  );
}
